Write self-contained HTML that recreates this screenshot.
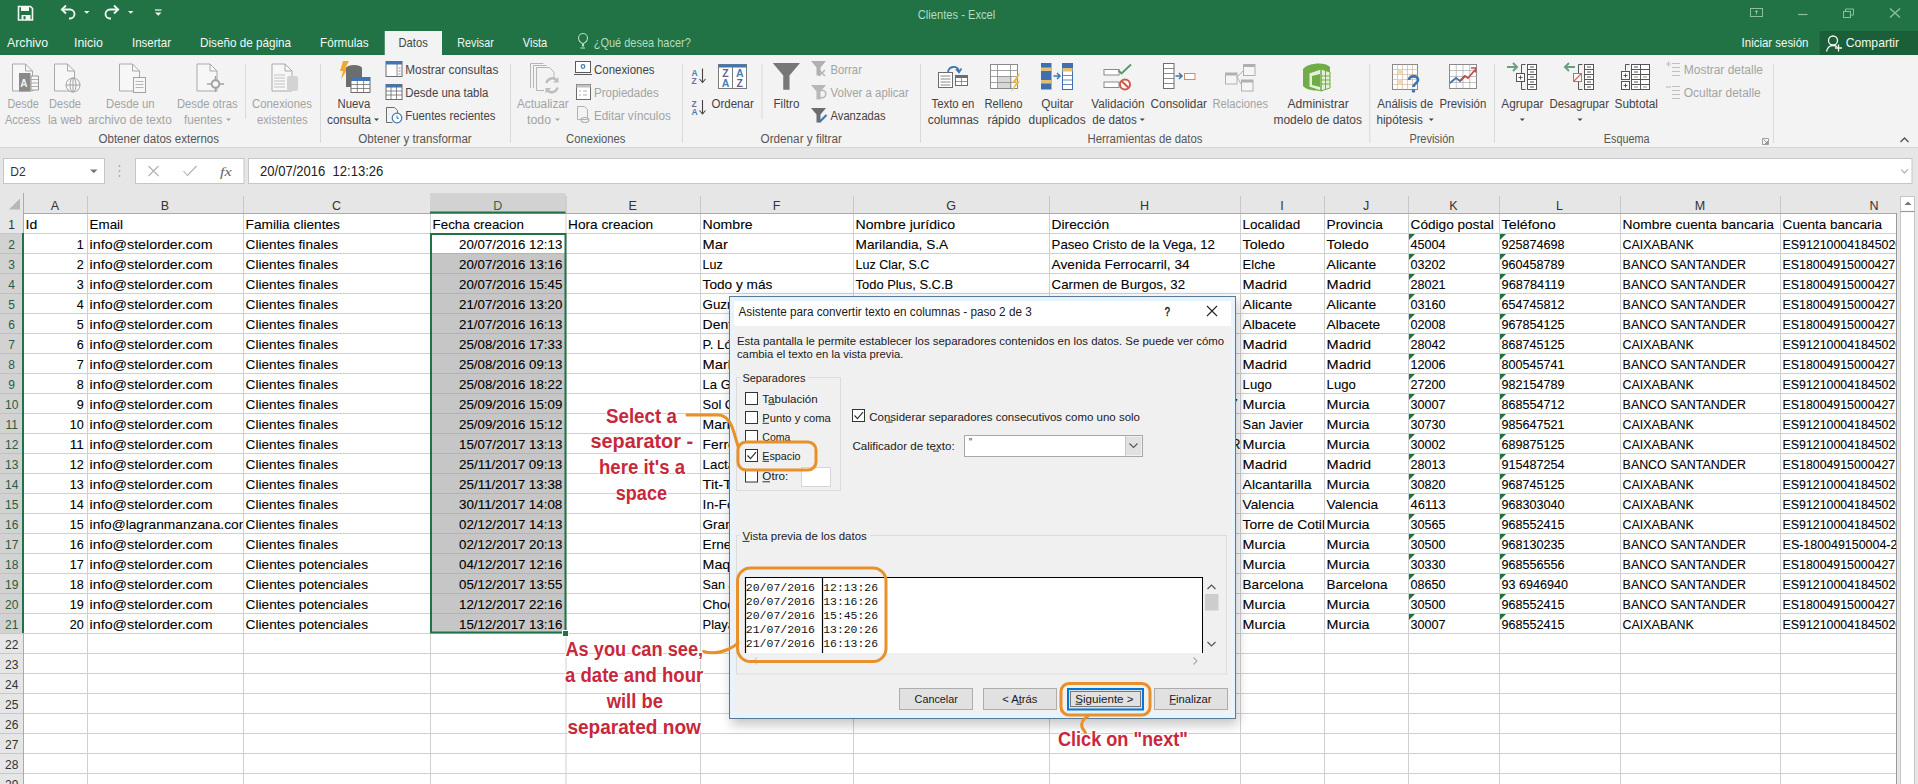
<!DOCTYPE html>
<html><head><meta charset="utf-8"><title>Clientes - Excel</title>
<style>
html,body{margin:0;padding:0;background:#fff;overflow:hidden;}
svg{display:block;font-family:"Liberation Sans", sans-serif;}
</style></head><body>
<svg width="1918" height="784" viewBox="0 0 1918 784">
<defs>
<filter id="shadow" x="-10%" y="-10%" width="125%" height="125%"><feGaussianBlur stdDeviation="6"/></filter>
</defs>
<rect x="0" y="0" width="1918" height="784" fill="#ffffff" />
<rect x="0" y="0" width="1918" height="55" fill="#217346" />
<path d="M18.5 6.5 h12 l2 2 v11.5 h-14 z" fill="none" stroke="#f2f8f4" stroke-width="1.6" />
<rect x="21" y="7" width="8" height="4" fill="#f2f8f4" />
<rect x="21.5" y="15" width="9" height="5" fill="#f2f8f4" />
<rect x="23.5" y="16.2" width="2" height="3" fill="#217346" />
<path d="M63 9.5 h7 a4.5 4.5 0 0 1 0 9 h-1" fill="none" stroke="#f2f8f4" stroke-width="1.8" />
<path d="M66 5.5 l-4.2 4 l4.2 4" fill="none" stroke="#f2f8f4" stroke-width="1.8" />
<path d="M84 11 h5.5 l-2.75 2.75 z" fill="#f2f8f4" />
<path d="M117 9.5 h-7 a4.5 4.5 0 0 0 0 9 h1" fill="none" stroke="#f2f8f4" stroke-width="1.8" />
<path d="M114 5.5 l4.2 4 l-4.2 4" fill="none" stroke="#f2f8f4" stroke-width="1.8" />
<path d="M128 11 h5.5 l-2.75 2.75 z" fill="#f2f8f4" />
<line x1="155" y1="10" x2="161.5" y2="10" stroke="#f2f8f4" stroke-width="1.2" />
<path d="M155 12.5 h6.5 l-3.25 3.25 z" fill="#f2f8f4" />
<text x="917.80" y="18.80" font-size="12.5" fill="#b4dcc0" textLength="77.40" lengthAdjust="spacingAndGlyphs"  >Clientes - Excel</text>
<rect x="1750.5" y="8.5" width="12" height="8" fill="none" stroke="#8cbf9e" stroke-width="1" />
<path d="M1756.5 10 l-2 2 h4 z" fill="#8cbf9e" />
<line x1="1756.5" y1="11" x2="1756.5" y2="14.5" stroke="#8cbf9e" stroke-width="1" />
<line x1="1798" y1="14.5" x2="1807.5" y2="14.5" stroke="#8cbf9e" stroke-width="1.2" />
<rect x="1843.5" y="11.5" width="7" height="6" fill="none" stroke="#8cbf9e" stroke-width="1" />
<path d="M1845.5 11.5 v-2.5 h8 v6 h-2.5" fill="none" stroke="#8cbf9e" stroke-width="1" />
<path d="M1890 8.5 l10 9 M1900 8.5 l-10 9" fill="none" stroke="#8cbf9e" stroke-width="1.4" />
<rect x="384.75" y="31" width="57.25" height="24" fill="#f3f3f3" />
<text x="7.00" y="47.10" font-size="13" fill="#f2f8f4" textLength="41.00" lengthAdjust="spacingAndGlyphs"  >Archivo</text>
<text x="74.00" y="47.10" font-size="13" fill="#f2f8f4" textLength="28.80" lengthAdjust="spacingAndGlyphs"  >Inicio</text>
<text x="132.00" y="47.10" font-size="13" fill="#f2f8f4" textLength="39.00" lengthAdjust="spacingAndGlyphs"  >Insertar</text>
<text x="200.00" y="47.10" font-size="13" fill="#f2f8f4" textLength="91.00" lengthAdjust="spacingAndGlyphs"  >Diseño de página</text>
<text x="320.00" y="47.10" font-size="13" fill="#f2f8f4" textLength="48.70" lengthAdjust="spacingAndGlyphs"  >Fórmulas</text>
<text x="457.25" y="47.10" font-size="13" fill="#f2f8f4" textLength="36.50" lengthAdjust="spacingAndGlyphs"  >Revisar</text>
<text x="522.75" y="47.10" font-size="13" fill="#f2f8f4" textLength="24.50" lengthAdjust="spacingAndGlyphs"  >Vista</text>
<text x="398.50" y="47.10" font-size="13" fill="#444444" textLength="29.25" lengthAdjust="spacingAndGlyphs"  >Datos</text>
<path d="M582.5 46 v-2.5 c-3 -1.5 -4 -3.5 -4 -5.5 a4.5 4.5 0 0 1 9 0 c0 2 -1 4 -4 5.5 v2.5 z" fill="none" stroke="#b4dcc0" stroke-width="1.1" />
<line x1="580.5" y1="48" x2="585" y2="48" stroke="#b4dcc0" stroke-width="1.1" />
<text x="593.75" y="47.10" font-size="13" fill="#b4dcc0" textLength="97.00" lengthAdjust="spacingAndGlyphs"  >¿Qué desea hacer?</text>
<text x="1741.60" y="47.00" font-size="13" fill="#f2f8f4" textLength="66.80" lengthAdjust="spacingAndGlyphs"  >Iniciar sesión</text>
<rect x="1819.7" y="31" width="98.3" height="24" fill="#1b5f38" />
<circle cx="1833" cy="40.5" r="4.5" fill="none" stroke="#f2f8f4" stroke-width="1.3"/>
<path d="M1826.5 51.5 c1 -4.5 4 -6 6.5 -6 c1.5 0 3 0.5 4 1.2" fill="none" stroke="#f2f8f4" stroke-width="1.3" />
<path d="M1838.5 44.5 v7 M1835 48 h7" fill="none" stroke="#f2f8f4" stroke-width="1.3" />
<text x="1845.70" y="47.00" font-size="13" fill="#f2f8f4" textLength="53.40" lengthAdjust="spacingAndGlyphs"  >Compartir</text>
<rect x="0" y="55" width="1918" height="92" fill="#f3f3f3" />
<line x1="0" y1="147.5" x2="1918" y2="147.5" stroke="#d5d5d5" stroke-width="1" />
<path d="M12.5 64.0 h13 l7 7 v20 h-20 z" fill="#f7f7f7" stroke="#a9a9a9" stroke-width="1" />
<path d="M25.5 64.0 v7 h7" fill="none" stroke="#a9a9a9" stroke-width="1" />
<rect x="19" y="73" width="11.5" height="18.5" fill="#8a8a8a" />
<text x="20.20" y="86.50" font-size="10" fill="#f3f3f3" font-weight="700"  >A</text>
<path d="M31 76 h7.5 v14 h-7.5 z" fill="#f7f7f7" stroke="#9a9a9a" stroke-width="1" />
<line x1="31" y1="79.5" x2="38.5" y2="79.5" stroke="#9a9a9a" stroke-width="0.8" />
<line x1="31" y1="83" x2="38.5" y2="83" stroke="#9a9a9a" stroke-width="0.8" />
<line x1="31" y1="86.5" x2="38.5" y2="86.5" stroke="#9a9a9a" stroke-width="0.8" />
<path d="M54.5 64.0 h13 l7 7 v20 h-20 z" fill="#f7f7f7" stroke="#a9a9a9" stroke-width="1" />
<path d="M67.5 64.0 v7 h7" fill="none" stroke="#a9a9a9" stroke-width="1" />
<circle cx="73" cy="85" r="7" fill="#f7f7f7" stroke="#a3a3a3" stroke-width="1"/>
<ellipse cx="73" cy="85" rx="3" ry="7" fill="none" stroke="#a3a3a3" stroke-width="1"/>
<line x1="66" y1="85" x2="80" y2="85" stroke="#a3a3a3" stroke-width="1" />
<line x1="73" y1="78" x2="73" y2="92" stroke="#a3a3a3" stroke-width="1" />
<path d="M119.5 64.0 h13 l7 7 v20 h-20 z" fill="#f7f7f7" stroke="#a9a9a9" stroke-width="1" />
<path d="M132.5 64.0 v7 h7" fill="none" stroke="#a9a9a9" stroke-width="1" />
<rect x="133.5" y="77.5" width="12" height="15" fill="#f7f7f7" stroke="#a3a3a3" stroke-width="1" />
<line x1="135.5" y1="81.5" x2="143.5" y2="81.5" stroke="#a3a3a3" stroke-width="0.8" />
<line x1="135.5" y1="84.5" x2="143.5" y2="84.5" stroke="#a3a3a3" stroke-width="0.8" />
<line x1="135.5" y1="87.5" x2="143.5" y2="87.5" stroke="#a3a3a3" stroke-width="0.8" />
<path d="M197.0 64.0 h13 l7 7 v20 h-20 z" fill="#f7f7f7" stroke="#a9a9a9" stroke-width="1" />
<path d="M210.0 64.0 v7 h7" fill="none" stroke="#a9a9a9" stroke-width="1" />
<circle cx="215.5" cy="84" r="3.8" fill="#f7f7f7" stroke="#a3a3a3" stroke-width="2"/>
<line x1="207" y1="84" x2="211" y2="84" stroke="#a3a3a3" stroke-width="1.5" />
<line x1="220" y1="84" x2="224" y2="84" stroke="#a3a3a3" stroke-width="1.5" />
<line x1="215.5" y1="76" x2="215.5" y2="80" stroke="#a3a3a3" stroke-width="1.5" />
<line x1="215.5" y1="88" x2="215.5" y2="92" stroke="#a3a3a3" stroke-width="1.5" />
<path d="M272.0 64.0 h13 l7 7 v20 h-20 z" fill="#f7f7f7" stroke="#a9a9a9" stroke-width="1" />
<path d="M285.0 64.0 v7 h7" fill="none" stroke="#a9a9a9" stroke-width="1" />
<line x1="274" y1="75" x2="285" y2="75" stroke="#b5b5b5" stroke-width="0.8" />
<line x1="274" y1="78" x2="285" y2="78" stroke="#b5b5b5" stroke-width="0.8" />
<line x1="274" y1="81" x2="285" y2="81" stroke="#b5b5b5" stroke-width="0.8" />
<line x1="274" y1="84" x2="285" y2="84" stroke="#b5b5b5" stroke-width="0.8" />
<line x1="274" y1="87" x2="285" y2="87" stroke="#b5b5b5" stroke-width="0.8" />
<rect x="287" y="76" width="11" height="15" fill="#d3d3d3" rx="2" />
<text x="7.50" y="108.20" font-size="12" fill="#a3a3a3" textLength="31.25" lengthAdjust="spacingAndGlyphs"  >Desde</text>
<text x="5.00" y="124.00" font-size="12" fill="#a3a3a3" textLength="35.50" lengthAdjust="spacingAndGlyphs"  >Access</text>
<text x="49.00" y="108.20" font-size="12" fill="#a3a3a3" textLength="32.00" lengthAdjust="spacingAndGlyphs"  >Desde</text>
<text x="48.00" y="124.00" font-size="12" fill="#a3a3a3" textLength="34.00" lengthAdjust="spacingAndGlyphs"  >la web</text>
<text x="106.00" y="108.20" font-size="12" fill="#a3a3a3" textLength="48.50" lengthAdjust="spacingAndGlyphs"  >Desde un</text>
<text x="88.00" y="124.00" font-size="12" fill="#a3a3a3" textLength="83.75" lengthAdjust="spacingAndGlyphs"  >archivo de texto</text>
<text x="177.00" y="108.20" font-size="12" fill="#a3a3a3" textLength="60.50" lengthAdjust="spacingAndGlyphs"  >Desde otras</text>
<text x="184.00" y="124.00" font-size="12" fill="#a3a3a3" textLength="38.50" lengthAdjust="spacingAndGlyphs"  >fuentes</text>
<path d="M226.0 118.5 h5 l-2.5 2.5 z" fill="#a3a3a3" />
<line x1="245.5" y1="64" x2="245.5" y2="119" stroke="#dadada" stroke-width="1" />
<text x="252.00" y="108.20" font-size="12" fill="#a3a3a3" textLength="60.00" lengthAdjust="spacingAndGlyphs"  >Conexiones</text>
<text x="257.00" y="124.00" font-size="12" fill="#a3a3a3" textLength="50.50" lengthAdjust="spacingAndGlyphs"  >existentes</text>
<text x="98.50" y="143.30" font-size="12" fill="#555555" textLength="120.50" lengthAdjust="spacingAndGlyphs"  >Obtener datos externos</text>
<line x1="320.5" y1="64" x2="320.5" y2="143" stroke="#dadada" stroke-width="1" />
<path d="M343 61 l6 0 l-3.5 6.5 l3 0 l-7.5 12 l2 -8.5 l-3 0 z" fill="#f0a830" />
<ellipse cx="354" cy="68" rx="8" ry="3" fill="#6d6d6d"/>
<rect x="346" y="68" width="16" height="19" fill="#6d6d6d" />
<rect x="351" y="77.5" width="19" height="15" fill="#ffffff" stroke="#6d6d6d" stroke-width="1" />
<rect x="351" y="77.5" width="19" height="3.5" fill="#3f77b5" />
<line x1="357.3" y1="80" x2="357.3" y2="92.5" stroke="#6d6d6d" stroke-width="0.8" />
<line x1="363.6" y1="80" x2="363.6" y2="92.5" stroke="#6d6d6d" stroke-width="0.8" />
<line x1="351" y1="84.5" x2="370" y2="84.5" stroke="#6d6d6d" stroke-width="0.8" />
<line x1="351" y1="88.5" x2="370" y2="88.5" stroke="#6d6d6d" stroke-width="0.8" />
<text x="337.50" y="108.20" font-size="12" fill="#444444" textLength="32.80" lengthAdjust="spacingAndGlyphs"  >Nueva</text>
<text x="327.00" y="124.00" font-size="12" fill="#444444" textLength="44.00" lengthAdjust="spacingAndGlyphs"  >consulta</text>
<path d="M374.0 118.5 h5 l-2.5 2.5 z" fill="#444444" />
<rect x="386.0" y="61.5" width="16" height="15" fill="#ffffff" stroke="#6d6d6d" stroke-width="1" />
<rect x="386.0" y="61.5" width="16" height="3" fill="#3f77b5" />
<line x1="397" y1="64" x2="397" y2="76" stroke="#6d6d6d" stroke-width="0.8" />
<line x1="398.5" y1="68" x2="400.5" y2="68" stroke="#6d6d6d" stroke-width="0.8" />
<line x1="398.5" y1="71" x2="400.5" y2="71" stroke="#6d6d6d" stroke-width="0.8" />
<line x1="398.5" y1="74" x2="400.5" y2="74" stroke="#6d6d6d" stroke-width="0.8" />
<rect x="386.0" y="84.5" width="16" height="15" fill="#ffffff" stroke="#6d6d6d" stroke-width="1" />
<rect x="386.0" y="84.5" width="16" height="3" fill="#3f77b5" />
<line x1="391" y1="87" x2="391" y2="100" stroke="#6d6d6d" stroke-width="0.8" />
<line x1="396.5" y1="87" x2="396.5" y2="100" stroke="#6d6d6d" stroke-width="0.8" />
<line x1="386" y1="91" x2="402" y2="91" stroke="#6d6d6d" stroke-width="0.8" />
<line x1="386" y1="95" x2="402" y2="95" stroke="#6d6d6d" stroke-width="0.8" />
<path d="M386.5 107.5 h8 l3 3 v6 M386.5 107.5 v15 h6" fill="none" stroke="#6d6d6d" stroke-width="1" />
<circle cx="397" cy="118" r="4.8" fill="#ffffff" stroke="#3f77b5" stroke-width="1.2"/>
<path d="M397 115.5 v2.8 h2" fill="none" stroke="#3f77b5" stroke-width="1" />
<text x="405.30" y="73.70" font-size="12" fill="#444444" textLength="93.00" lengthAdjust="spacingAndGlyphs"  >Mostrar consultas</text>
<text x="405.30" y="96.50" font-size="12" fill="#444444" textLength="83.00" lengthAdjust="spacingAndGlyphs"  >Desde una tabla</text>
<text x="405.30" y="119.50" font-size="12" fill="#444444" textLength="90.20" lengthAdjust="spacingAndGlyphs"  >Fuentes recientes</text>
<text x="358.30" y="143.30" font-size="12" fill="#555555" textLength="113.40" lengthAdjust="spacingAndGlyphs"  >Obtener y transformar</text>
<line x1="510.5" y1="64" x2="510.5" y2="143" stroke="#dadada" stroke-width="1" />
<path d="M530.5 88 v-24.5 h13" fill="none" stroke="#b5b5b5" stroke-width="1" />
<path d="M533.5 88 v-22.5 h13" fill="none" stroke="#b5b5b5" stroke-width="1" />
<path d="M536.5 90.5 v-23 h13 l4.5 4.5 v7" fill="none" stroke="#b5b5b5" stroke-width="1" />
<line x1="536.5" y1="90.5" x2="544" y2="90.5" stroke="#b5b5b5" stroke-width="1" />
<path d="M546.5 83 a6 6 0 0 1 10.5 -2.5" fill="none" stroke="#bdbdbd" stroke-width="2.4" />
<path d="M557.5 87.5 a6 6 0 0 1 -10.5 2.5" fill="none" stroke="#bdbdbd" stroke-width="2.4" />
<path d="M558.5 77 v5.5 h-5.5 z" fill="#bdbdbd" />
<path d="M545.5 93.5 v-5.5 h5.5 z" fill="#bdbdbd" />
<text x="517.00" y="108.20" font-size="12" fill="#a3a3a3" textLength="51.75" lengthAdjust="spacingAndGlyphs"  >Actualizar</text>
<text x="527.00" y="124.00" font-size="12" fill="#a3a3a3" textLength="24.00" lengthAdjust="spacingAndGlyphs"  >todo</text>
<path d="M555.0 118.5 h5 l-2.5 2.5 z" fill="#a3a3a3" />
<rect x="575.5" y="61.5" width="15" height="11" fill="#ffffff" stroke="#5a5a5a" stroke-width="1" />
<line x1="574" y1="74.5" x2="592" y2="74.5" stroke="#5a5a5a" stroke-width="1" />
<circle cx="583" cy="66.5" r="1.8" fill="none" stroke="#3f77b5" stroke-width="1.2"/>
<rect x="576.5" y="84.5" width="14" height="15" fill="#ffffff" stroke="#6d6d6d" stroke-width="1" />
<rect x="576.5" y="84.5" width="14" height="3" fill="#c0c0c0" />
<line x1="579" y1="91" x2="581" y2="91" stroke="#b0b0b0" stroke-width="1" />
<line x1="583" y1="91" x2="587" y2="91" stroke="#b0b0b0" stroke-width="1" />
<line x1="579" y1="95" x2="581" y2="95" stroke="#b0b0b0" stroke-width="1" />
<line x1="583" y1="95" x2="587" y2="95" stroke="#b0b0b0" stroke-width="1" />
<path d="M577.5 106.5 h7 l3 3 v10 h-10 z" fill="none" stroke="#b0b0b0" stroke-width="1" />
<ellipse cx="585" cy="120" rx="4" ry="2.5" fill="none" stroke="#b0b0b0" stroke-width="1.2"/>
<text x="594.00" y="73.70" font-size="12" fill="#444444" textLength="60.50" lengthAdjust="spacingAndGlyphs"  >Conexiones</text>
<text x="594.00" y="96.50" font-size="12" fill="#a3a3a3" textLength="64.75" lengthAdjust="spacingAndGlyphs"  >Propiedades</text>
<text x="594.00" y="119.50" font-size="12" fill="#a3a3a3" textLength="76.75" lengthAdjust="spacingAndGlyphs"  >Editar vínculos</text>
<text x="566.00" y="143.30" font-size="12" fill="#555555" textLength="59.50" lengthAdjust="spacingAndGlyphs"  >Conexiones</text>
<line x1="682.5" y1="64" x2="682.5" y2="143" stroke="#dadada" stroke-width="1" />
<text x="691.50" y="75.50" font-size="8.5" fill="#4a7fb5" font-weight="700"  >A</text>
<text x="691.50" y="83.50" font-size="8.5" fill="#7a6aa0" font-weight="700"  >Z</text>
<line x1="702.5" y1="68.5" x2="702.5" y2="82.5" stroke="#444" stroke-width="1.1" />
<path d="M699.5 79.0 l3 3.5 l3 -3.5" fill="none" stroke="#444" stroke-width="1.1" />
<text x="691.50" y="107.00" font-size="8.5" fill="#7a6aa0" font-weight="700"  >Z</text>
<text x="691.50" y="115.00" font-size="8.5" fill="#4a7fb5" font-weight="700"  >A</text>
<line x1="702.5" y1="100" x2="702.5" y2="114" stroke="#444" stroke-width="1.1" />
<path d="M699.5 110.5 l3 3.5 l3 -3.5" fill="none" stroke="#444" stroke-width="1.1" />
<rect x="718.5" y="64.5" width="28" height="24" fill="#ffffff" stroke="#7a7a7a" stroke-width="1" />
<rect x="718.5" y="64.5" width="28" height="3" fill="#3f77b5" />
<line x1="732.5" y1="67" x2="732.5" y2="88.5" stroke="#7a7a7a" stroke-width="1" />
<text x="725.50" y="77.30" font-size="10.5" fill="#6b5b95" font-weight="700" text-anchor="middle"  >Z</text>
<text x="725.50" y="87.30" font-size="10.5" fill="#4a7fb5" font-weight="700" text-anchor="middle"  >A</text>
<text x="739.75" y="77.30" font-size="10.5" fill="#4a7fb5" font-weight="700" text-anchor="middle"  >A</text>
<text x="739.75" y="87.30" font-size="10.5" fill="#6b5b95" font-weight="700" text-anchor="middle"  >Z</text>
<text x="711.50" y="108.20" font-size="12" fill="#444444" textLength="42.25" lengthAdjust="spacingAndGlyphs"  >Ordenar</text>
<line x1="762.0" y1="64" x2="762.0" y2="119" stroke="#dadada" stroke-width="1" />
<path d="M772.75 63 h27.25 l-10.5 12.5 v14.25 h-6.25 v-14.25 z" fill="#777777" />
<text x="773.50" y="108.20" font-size="12" fill="#444444" textLength="25.90" lengthAdjust="spacingAndGlyphs"  >Filtro</text>
<path d="M811 61 h15 l-5.5 6.5 v8 h-4 v-8 z" fill="#b0b0b0" />
<path d="M819 70 l6 6 M825 70 l-6 6" fill="none" stroke="#b0b0b0" stroke-width="1.3" />
<path d="M811 85 h15 l-5.5 6.5 v8 h-4 v-8 z" fill="#b8b8b8" />
<circle cx="822" cy="94" r="3.8" fill="none" stroke="#b8b8b8" stroke-width="1.6"/>
<path d="M811 108 h15 l-5.5 6.5 v8 h-4 v-8 z" fill="#6d6d6d" />
<path d="M819.5 122 l7 -7" fill="none" stroke="#3f77b5" stroke-width="2.2" />
<text x="830.60" y="73.70" font-size="12" fill="#a3a3a3" textLength="31.30" lengthAdjust="spacingAndGlyphs"  >Borrar</text>
<text x="830.60" y="96.50" font-size="12" fill="#a3a3a3" textLength="78.15" lengthAdjust="spacingAndGlyphs"  >Volver a aplicar</text>
<text x="830.60" y="119.50" font-size="12" fill="#444444" textLength="55.00" lengthAdjust="spacingAndGlyphs"  >Avanzadas</text>
<text x="760.60" y="143.30" font-size="12" fill="#555555" textLength="81.30" lengthAdjust="spacingAndGlyphs"  >Ordenar y filtrar</text>
<line x1="920.5" y1="64" x2="920.5" y2="143" stroke="#dadada" stroke-width="1" />
<path d="M948 72 c1 -6 9 -7 11 -1" fill="none" stroke="#3f77b5" stroke-width="1.8" />
<path d="M956 69 l3 3.5 l2.5 -4" fill="none" stroke="#3f77b5" stroke-width="1.6" />
<rect x="938.5" y="72.5" width="14" height="15" fill="#ffffff" stroke="#6d6d6d" stroke-width="1" />
<line x1="940.5" y1="76" x2="950.5" y2="76" stroke="#6d6d6d" stroke-width="0.8" />
<line x1="940.5" y1="79" x2="950.5" y2="79" stroke="#6d6d6d" stroke-width="0.8" />
<line x1="940.5" y1="82" x2="950.5" y2="82" stroke="#6d6d6d" stroke-width="0.8" />
<line x1="940.5" y1="85" x2="950.5" y2="85" stroke="#6d6d6d" stroke-width="0.8" />
<rect x="955.5" y="75.5" width="12" height="10" fill="#ffffff" stroke="#6d6d6d" stroke-width="1" />
<rect x="955.5" y="75.5" width="12" height="2.5" fill="#6d6d6d" />
<line x1="961.5" y1="78" x2="961.5" y2="85.5" stroke="#6d6d6d" stroke-width="0.7" />
<line x1="955.5" y1="81.5" x2="967.5" y2="81.5" stroke="#6d6d6d" stroke-width="0.7" />
<text x="931.50" y="108.20" font-size="12" fill="#444444" textLength="42.90" lengthAdjust="spacingAndGlyphs"  >Texto en</text>
<text x="927.75" y="124.00" font-size="12" fill="#444444" textLength="51.00" lengthAdjust="spacingAndGlyphs"  >columnas</text>
<rect x="990.5" y="64.5" width="27" height="24" fill="#ffffff" stroke="#8a8a8a" stroke-width="1" />
<rect x="998" y="76" width="14" height="12" fill="#d8d8d8" />
<line x1="997.5" y1="64.5" x2="997.5" y2="88.5" stroke="#8a8a8a" stroke-width="0.8" />
<line x1="1010.5" y1="64.5" x2="1010.5" y2="88.5" stroke="#8a8a8a" stroke-width="0.8" />
<line x1="990.5" y1="70.5" x2="1017.5" y2="70.5" stroke="#8a8a8a" stroke-width="0.8" />
<line x1="990.5" y1="76.5" x2="1017.5" y2="76.5" stroke="#8a8a8a" stroke-width="0.8" />
<line x1="990.5" y1="82.5" x2="1017.5" y2="82.5" stroke="#8a8a8a" stroke-width="0.8" />
<path d="M1019 73.5 l-7 9 h4 l-5.5 10 l9.5 -11 h-4 l4 -8 z" fill="#f0b840" />
<text x="984.40" y="108.20" font-size="12" fill="#444444" textLength="38.10" lengthAdjust="spacingAndGlyphs"  >Relleno</text>
<text x="987.50" y="124.00" font-size="12" fill="#444444" textLength="33.10" lengthAdjust="spacingAndGlyphs"  >rápido</text>
<rect x="1041" y="63" width="10.5" height="26.5" fill="#3f6fb0" />
<rect x="1041" y="67.5" width="10.5" height="3.5" fill="#e5c070" />
<rect x="1041" y="80" width="10.5" height="3.5" fill="#e5c070" />
<path d="M1053.5 76 h6 M1057 73 l3 3 l-3 3" fill="none" stroke="#3f77b5" stroke-width="1.5" />
<rect x="1062.5" y="63.5" width="10" height="26" fill="#ffffff" stroke="#3f6fb0" stroke-width="1" />
<rect x="1062.5" y="63.5" width="10" height="4.5" fill="#3f6fb0" />
<rect x="1062.5" y="68" width="10" height="3.5" fill="#e5c070" />
<line x1="1062.5" y1="75.5" x2="1072.5" y2="75.5" stroke="#3f6fb0" stroke-width="0.8" />
<line x1="1062.5" y1="80" x2="1072.5" y2="80" stroke="#3f6fb0" stroke-width="0.8" />
<line x1="1062.5" y1="84.5" x2="1072.5" y2="84.5" stroke="#3f6fb0" stroke-width="0.8" />
<text x="1041.25" y="108.20" font-size="12" fill="#444444" textLength="32.25" lengthAdjust="spacingAndGlyphs"  >Quitar</text>
<text x="1028.50" y="124.00" font-size="12" fill="#444444" textLength="57.10" lengthAdjust="spacingAndGlyphs"  >duplicados</text>
<rect x="1104" y="69.5" width="15" height="5.5" fill="#ffffff" stroke="#8a8a8a" stroke-width="1" />
<rect x="1104" y="82" width="15" height="5.5" fill="#ffffff" stroke="#8a8a8a" stroke-width="1" />
<path d="M1118.5 70.5 l3 3 l9.5 -9" fill="none" stroke="#4f9a6a" stroke-width="1.8" />
<circle cx="1125" cy="84.4" r="5" fill="#ffffff" stroke="#d05a4a" stroke-width="2"/>
<line x1="1121.5" y1="81" x2="1128.5" y2="87.8" stroke="#d05a4a" stroke-width="2" />
<text x="1091.25" y="108.20" font-size="12" fill="#444444" textLength="53.15" lengthAdjust="spacingAndGlyphs"  >Validación</text>
<text x="1092.25" y="124.00" font-size="12" fill="#444444" textLength="44.65" lengthAdjust="spacingAndGlyphs"  >de datos</text>
<path d="M1139.75 118.5 h5 l-2.5 2.5 z" fill="#444444" />
<rect x="1163.5" y="63.5" width="10.5" height="25" fill="#ffffff" stroke="#6d6d6d" stroke-width="1" />
<line x1="1163.5" y1="68.5" x2="1174" y2="68.5" stroke="#6d6d6d" stroke-width="0.8" />
<line x1="1163.5" y1="73.5" x2="1174" y2="73.5" stroke="#6d6d6d" stroke-width="0.8" />
<line x1="1163.5" y1="78.5" x2="1174" y2="78.5" stroke="#6d6d6d" stroke-width="0.8" />
<line x1="1163.5" y1="83.5" x2="1174" y2="83.5" stroke="#6d6d6d" stroke-width="0.8" />
<path d="M1175.5 76 h6 M1179 73 l3 3 l-3 3" fill="none" stroke="#3f77b5" stroke-width="1.5" />
<rect x="1184.5" y="73.5" width="10.5" height="6" fill="#ffffff" stroke="#d08a6a" stroke-width="1" />
<text x="1150.60" y="108.20" font-size="12" fill="#444444" textLength="56.30" lengthAdjust="spacingAndGlyphs"  >Consolidar</text>
<rect x="1225.5" y="73.0" width="11.5" height="11" fill="#f5f5f5" stroke="#b0b0b0" stroke-width="1" />
<rect x="1225.5" y="73.0" width="11.5" height="2.5" fill="#b0b0b0" />
<rect x="1243.5" y="64.5" width="11.5" height="11" fill="#f5f5f5" stroke="#b0b0b0" stroke-width="1" />
<rect x="1243.5" y="64.5" width="11.5" height="2.5" fill="#b0b0b0" />
<rect x="1241.5" y="80.0" width="11.5" height="11" fill="#f5f5f5" stroke="#b0b0b0" stroke-width="1" />
<rect x="1241.5" y="80.0" width="11.5" height="2.5" fill="#b0b0b0" />
<path d="M1237 77 l6 -6 M1237 77 l4 7" fill="none" stroke="#b0b0b0" stroke-width="1" />
<text x="1212.50" y="108.20" font-size="12" fill="#a3a3a3" textLength="55.50" lengthAdjust="spacingAndGlyphs"  >Relaciones</text>
<path d="M1303 69 c4 -6 22 -8 27 -2 v19 c-5 6 -22 6 -27 0 z" fill="#70ad47" />
<path d="M1309 73 l12 -4 l9 3 v16 l-9 3 l-12 -4 z" fill="#e4f0d8" stroke="#70ad47" stroke-width="1" />
<line x1="1321" y1="69" x2="1321" y2="91" stroke="#70ad47" stroke-width="1.5" />
<line x1="1325.5" y1="71" x2="1325.5" y2="89" stroke="#70ad47" stroke-width="1" />
<line x1="1321" y1="76" x2="1330" y2="76" stroke="#70ad47" stroke-width="1" />
<line x1="1321" y1="80" x2="1330" y2="80" stroke="#70ad47" stroke-width="1" />
<line x1="1321" y1="84" x2="1330" y2="84" stroke="#70ad47" stroke-width="1" />
<path d="M1312 76 l8 -2 v13 l-8 -2 z" fill="#70ad47" />
<text x="1287.50" y="108.20" font-size="12" fill="#444444" textLength="61.25" lengthAdjust="spacingAndGlyphs"  >Administrar</text>
<text x="1273.50" y="124.00" font-size="12" fill="#444444" textLength="88.40" lengthAdjust="spacingAndGlyphs"  >modelo de datos</text>
<text x="1087.50" y="143.30" font-size="12" fill="#555555" textLength="115.00" lengthAdjust="spacingAndGlyphs"  >Herramientas de datos</text>
<line x1="1369.75" y1="64" x2="1369.75" y2="143" stroke="#dadada" stroke-width="1" />
<rect x="1392.5" y="64.5" width="25" height="25" fill="#ffffff" stroke="#8a8a8a" stroke-width="1" />
<line x1="1397.5" y1="64.5" x2="1397.5" y2="89.5" stroke="#c9a98a" stroke-width="0.6" />
<line x1="1392.5" y1="69.5" x2="1417.5" y2="69.5" stroke="#c9a98a" stroke-width="0.6" />
<line x1="1402.5" y1="64.5" x2="1402.5" y2="89.5" stroke="#c9a98a" stroke-width="0.6" />
<line x1="1392.5" y1="74.5" x2="1417.5" y2="74.5" stroke="#c9a98a" stroke-width="0.6" />
<line x1="1407.5" y1="64.5" x2="1407.5" y2="89.5" stroke="#c9a98a" stroke-width="0.6" />
<line x1="1392.5" y1="79.5" x2="1417.5" y2="79.5" stroke="#c9a98a" stroke-width="0.6" />
<line x1="1412.5" y1="64.5" x2="1412.5" y2="89.5" stroke="#c9a98a" stroke-width="0.6" />
<line x1="1392.5" y1="84.5" x2="1417.5" y2="84.5" stroke="#c9a98a" stroke-width="0.6" />
<rect x="1397.5" y="69.5" width="5" height="5" fill="#f3d9b8" />
<rect x="1397.5" y="79.5" width="5" height="5" fill="#f3d9b8" />
<path d="M1409 80 c0 -5 9 -5 9 0 c0 3 -4.5 3.5 -4.5 7" fill="none" stroke="#3f77b5" stroke-width="2.8" fill="#ffffff"/>
<circle cx="1413.5" cy="91" r="1.8" fill="#3f77b5"/>
<text x="1377.25" y="108.20" font-size="12" fill="#444444" textLength="55.85" lengthAdjust="spacingAndGlyphs"  >Análisis de</text>
<text x="1376.50" y="124.00" font-size="12" fill="#444444" textLength="46.25" lengthAdjust="spacingAndGlyphs"  >hipótesis</text>
<path d="M1428.75 118.5 h5 l-2.5 2.5 z" fill="#444444" />
<rect x="1449.5" y="64.5" width="27" height="24" fill="#ffffff" stroke="#8a8a8a" stroke-width="1" />
<line x1="1456.25" y1="64.5" x2="1456.25" y2="88.5" stroke="#9a9a9a" stroke-width="0.6" />
<line x1="1463.0" y1="64.5" x2="1463.0" y2="88.5" stroke="#9a9a9a" stroke-width="0.6" />
<line x1="1469.75" y1="64.5" x2="1469.75" y2="88.5" stroke="#9a9a9a" stroke-width="0.6" />
<line x1="1449.5" y1="70.5" x2="1476.5" y2="70.5" stroke="#9a9a9a" stroke-width="0.6" />
<line x1="1449.5" y1="76.5" x2="1476.5" y2="76.5" stroke="#9a9a9a" stroke-width="0.6" />
<line x1="1449.5" y1="82.5" x2="1476.5" y2="82.5" stroke="#9a9a9a" stroke-width="0.6" />
<path d="M1450 83 l6 -5 l4 3 l5 -5" fill="none" stroke="#3f77b5" stroke-width="1.8" />
<path d="M1460 81 l5 -5 l3 2 l7 -8" fill="none" stroke="#c0504d" stroke-width="1.8" />
<path d="M1471 68 h4.5 v4.5" fill="none" stroke="#c0504d" stroke-width="1.6" />
<text x="1439.40" y="108.20" font-size="12" fill="#444444" textLength="46.85" lengthAdjust="spacingAndGlyphs"  >Previsión</text>
<text x="1409.40" y="143.30" font-size="12" fill="#555555" textLength="45.00" lengthAdjust="spacingAndGlyphs"  >Previsión</text>
<line x1="1494.5" y1="64" x2="1494.5" y2="143" stroke="#dadada" stroke-width="1" />
<path d="M1507 67 h10 M1513 63 l4 4 l-4 4" fill="none" stroke="#68a080" stroke-width="2" />
<path d="M1525.5 64.5 h-4 v25 h4" fill="none" stroke="#555" stroke-width="1" />
<rect x="1516.5" y="73.5" width="8" height="8" fill="#ffffff" stroke="#555" stroke-width="1" />
<path d="M1518.5 77.5 h4 M1520.5 75.5 v4" fill="none" stroke="#555" stroke-width="1" />
<rect x="1527.5" y="64.5" width="9" height="25" fill="#ffffff" stroke="#555" stroke-width="1" />
<line x1="1527.5" y1="69.5" x2="1536.5" y2="69.5" stroke="#555" stroke-width="1" />
<line x1="1527.5" y1="74.5" x2="1536.5" y2="74.5" stroke="#555" stroke-width="1" />
<line x1="1527.5" y1="79.5" x2="1536.5" y2="79.5" stroke="#555" stroke-width="1" />
<line x1="1527.5" y1="84.5" x2="1536.5" y2="84.5" stroke="#555" stroke-width="1" />
<line x1="1530" y1="67" x2="1534" y2="67" stroke="#555" stroke-width="1" />
<line x1="1530" y1="72" x2="1534" y2="72" stroke="#555" stroke-width="1" />
<line x1="1530" y1="77" x2="1534" y2="77" stroke="#555" stroke-width="1" />
<line x1="1530" y1="82" x2="1534" y2="82" stroke="#555" stroke-width="1" />
<line x1="1530" y1="87" x2="1534" y2="87" stroke="#555" stroke-width="1" />
<path d="M1575 67 h-10 M1569 63 l-4 4 l4 4" fill="none" stroke="#68a080" stroke-width="2" />
<path d="M1582.5 64.5 h-4 v25 h4" fill="none" stroke="#555" stroke-width="1" />
<rect x="1573.5" y="73.5" width="8" height="8" fill="#ffffff" stroke="#d06a5a" stroke-width="1" />
<line x1="1574" y1="81" x2="1581" y2="74" stroke="#d06a5a" stroke-width="1.2" />
<rect x="1584.5" y="64.5" width="9" height="25" fill="#ffffff" stroke="#555" stroke-width="1" />
<line x1="1584.5" y1="69.5" x2="1593.5" y2="69.5" stroke="#555" stroke-width="1" />
<line x1="1584.5" y1="74.5" x2="1593.5" y2="74.5" stroke="#555" stroke-width="1" />
<line x1="1584.5" y1="79.5" x2="1593.5" y2="79.5" stroke="#555" stroke-width="1" />
<line x1="1584.5" y1="84.5" x2="1593.5" y2="84.5" stroke="#555" stroke-width="1" />
<line x1="1587" y1="67" x2="1591" y2="67" stroke="#555" stroke-width="1" />
<line x1="1587" y1="72" x2="1591" y2="72" stroke="#555" stroke-width="1" />
<line x1="1587" y1="77" x2="1591" y2="77" stroke="#555" stroke-width="1" />
<line x1="1587" y1="82" x2="1591" y2="82" stroke="#555" stroke-width="1" />
<line x1="1587" y1="87" x2="1591" y2="87" stroke="#555" stroke-width="1" />
<text x="1501.25" y="108.20" font-size="12" fill="#444444" textLength="42.25" lengthAdjust="spacingAndGlyphs"  >Agrupar</text>
<path d="M1519.75 118.5 h5 l-2.5 2.5 z" fill="#444444" />
<text x="1549.40" y="108.20" font-size="12" fill="#444444" textLength="59.60" lengthAdjust="spacingAndGlyphs"  >Desagrupar</text>
<path d="M1577.5 118.5 h5 l-2.5 2.5 z" fill="#444444" />
<path d="M1629.5 64.5 h-4 v6" fill="none" stroke="#555" stroke-width="1" />
<rect x="1621.5" y="71.5" width="8" height="8" fill="#ffffff" stroke="#555" stroke-width="1" />
<rect x="1621.5" y="81.5" width="8" height="8" fill="#ffffff" stroke="#555" stroke-width="1" />
<path d="M1623.5 75.5 h4 M1625.5 73.5 v4 M1623.5 85.5 h4 M1625.5 83.5 v4" fill="none" stroke="#555" stroke-width="1" />
<rect x="1631.5" y="64.5" width="18" height="25" fill="#ffffff" stroke="#555" stroke-width="1" />
<line x1="1640.5" y1="64.5" x2="1640.5" y2="89.5" stroke="#555" stroke-width="1" />
<line x1="1631.5" y1="69.5" x2="1649.5" y2="69.5" stroke="#555" stroke-width="1" />
<line x1="1631.5" y1="74.5" x2="1649.5" y2="74.5" stroke="#555" stroke-width="1" />
<line x1="1631.5" y1="79.5" x2="1649.5" y2="79.5" stroke="#555" stroke-width="1" />
<line x1="1631.5" y1="84.5" x2="1649.5" y2="84.5" stroke="#555" stroke-width="1" />
<line x1="1634" y1="67" x2="1638" y2="67" stroke="#555" stroke-width="1" />
<line x1="1634" y1="72" x2="1638" y2="72" stroke="#555" stroke-width="1" />
<line x1="1634" y1="77" x2="1638" y2="77" stroke="#a08a70" stroke-width="1" />
<line x1="1643" y1="77" x2="1647" y2="77" stroke="#a08a70" stroke-width="1" />
<line x1="1634" y1="82" x2="1638" y2="82" stroke="#555" stroke-width="1" />
<line x1="1634" y1="87" x2="1638" y2="87" stroke="#a08a70" stroke-width="1" />
<line x1="1643" y1="87" x2="1647" y2="87" stroke="#a08a70" stroke-width="1" />
<text x="1614.50" y="108.20" font-size="12" fill="#444444" textLength="43.50" lengthAdjust="spacingAndGlyphs"  >Subtotal</text>
<line x1="1672" y1="63.5" x2="1680" y2="63.5" stroke="#c0c0c0" stroke-width="1" />
<line x1="1672" y1="67.5" x2="1680" y2="67.5" stroke="#c0c0c0" stroke-width="1" />
<line x1="1672" y1="71.5" x2="1680" y2="71.5" stroke="#c0c0c0" stroke-width="1" />
<line x1="1672" y1="75.5" x2="1680" y2="75.5" stroke="#c0c0c0" stroke-width="1" />
<line x1="1672" y1="86.5" x2="1680" y2="86.5" stroke="#c0c0c0" stroke-width="1" />
<line x1="1672" y1="90.5" x2="1680" y2="90.5" stroke="#c0c0c0" stroke-width="1" />
<line x1="1672" y1="94.5" x2="1680" y2="94.5" stroke="#c0c0c0" stroke-width="1" />
<line x1="1672" y1="98.5" x2="1680" y2="98.5" stroke="#c0c0c0" stroke-width="1" />
<path d="M1666 64 h5 M1668.5 61.5 v5" fill="none" stroke="#c0c0c0" stroke-width="1.2" />
<line x1="1666" y1="87" x2="1671" y2="87" stroke="#c0c0c0" stroke-width="1.2" />
<text x="1683.75" y="73.70" font-size="12" fill="#a3a3a3" textLength="79.25" lengthAdjust="spacingAndGlyphs"  >Mostrar detalle</text>
<text x="1683.75" y="96.50" font-size="12" fill="#a3a3a3" textLength="77.00" lengthAdjust="spacingAndGlyphs"  >Ocultar detalle</text>
<text x="1603.75" y="143.30" font-size="12" fill="#555555" textLength="45.75" lengthAdjust="spacingAndGlyphs"  >Esquema</text>
<path d="M1762.5 138.5 h6 v6 h-6 z" fill="none" stroke="#8a8a8a" stroke-width="0.8" />
<path d="M1763.5 139.5 l4 4 M1767.5 141 v2.5 h-2.5" fill="none" stroke="#8a8a8a" stroke-width="0.9" />
<line x1="1773.5" y1="64" x2="1773.5" y2="143" stroke="#dadada" stroke-width="1" />
<path d="M1900.5 142 l4 -4 l4 4" fill="none" stroke="#555" stroke-width="1.4" />
<rect x="0" y="148" width="1918" height="636" fill="#e6e6e6" />
<rect x="3.5" y="158.5" width="101" height="25" fill="#ffffff" stroke="#c6c6c6" stroke-width="1" />
<text x="10.30" y="175.70" font-size="13.5" fill="#333333" textLength="15.40" lengthAdjust="spacingAndGlyphs"  >D2</text>
<path d="M90 169.5 h7.5 l-3.75 3.75 z" fill="#777777" />
<circle cx="119.5" cy="166" r="0.9" fill="#a8a8a8"/>
<circle cx="119.5" cy="171" r="0.9" fill="#a8a8a8"/>
<circle cx="119.5" cy="176" r="0.9" fill="#a8a8a8"/>
<rect x="135.5" y="158.5" width="108.5" height="25" fill="#ffffff" stroke="#c6c6c6" stroke-width="1" />
<path d="M148.5 166 l10 10 M158.5 166 l-10 10" fill="none" stroke="#b0b0b0" stroke-width="1.1" />
<path d="M183.5 171 l4 4.5 l9 -9.5" fill="none" stroke="#b0b0b0" stroke-width="1.1" />
<text x="220.00" y="176.00" font-size="13" fill="#666666" textLength="11.70" lengthAdjust="spacingAndGlyphs"  font-style="italic" font-family="Liberation Serif, serif">fx</text>
<rect x="248.5" y="158.5" width="1663.5" height="25" fill="#ffffff" stroke="#c6c6c6" stroke-width="1" />
<text x="260.00" y="175.70" font-size="14" fill="#222222" textLength="123.30" lengthAdjust="spacingAndGlyphs"  >20/07/2016  12:13:26</text>
<path d="M1901.2 169.5 l3.3 3.5 l3.3 -3.5" fill="none" stroke="#b8b8b8" stroke-width="1.3" />
<rect x="23" y="213" width="1873" height="571" fill="#ffffff" />
<rect x="431" y="253" width="134" height="380" fill="#c6c6c6" />
<line x1="23" y1="233.5" x2="1896" y2="233.5" stroke="#d0d0d0" stroke-width="1" />
<line x1="23" y1="253.5" x2="1896" y2="253.5" stroke="#d0d0d0" stroke-width="1" />
<line x1="23" y1="273.5" x2="1896" y2="273.5" stroke="#d0d0d0" stroke-width="1" />
<line x1="23" y1="293.5" x2="1896" y2="293.5" stroke="#d0d0d0" stroke-width="1" />
<line x1="23" y1="313.5" x2="1896" y2="313.5" stroke="#d0d0d0" stroke-width="1" />
<line x1="23" y1="333.5" x2="1896" y2="333.5" stroke="#d0d0d0" stroke-width="1" />
<line x1="23" y1="353.5" x2="1896" y2="353.5" stroke="#d0d0d0" stroke-width="1" />
<line x1="23" y1="373.5" x2="1896" y2="373.5" stroke="#d0d0d0" stroke-width="1" />
<line x1="23" y1="393.5" x2="1896" y2="393.5" stroke="#d0d0d0" stroke-width="1" />
<line x1="23" y1="413.5" x2="1896" y2="413.5" stroke="#d0d0d0" stroke-width="1" />
<line x1="23" y1="433.5" x2="1896" y2="433.5" stroke="#d0d0d0" stroke-width="1" />
<line x1="23" y1="453.5" x2="1896" y2="453.5" stroke="#d0d0d0" stroke-width="1" />
<line x1="23" y1="473.5" x2="1896" y2="473.5" stroke="#d0d0d0" stroke-width="1" />
<line x1="23" y1="493.5" x2="1896" y2="493.5" stroke="#d0d0d0" stroke-width="1" />
<line x1="23" y1="513.5" x2="1896" y2="513.5" stroke="#d0d0d0" stroke-width="1" />
<line x1="23" y1="533.5" x2="1896" y2="533.5" stroke="#d0d0d0" stroke-width="1" />
<line x1="23" y1="553.5" x2="1896" y2="553.5" stroke="#d0d0d0" stroke-width="1" />
<line x1="23" y1="573.5" x2="1896" y2="573.5" stroke="#d0d0d0" stroke-width="1" />
<line x1="23" y1="593.5" x2="1896" y2="593.5" stroke="#d0d0d0" stroke-width="1" />
<line x1="23" y1="613.5" x2="1896" y2="613.5" stroke="#d0d0d0" stroke-width="1" />
<line x1="23" y1="633.5" x2="1896" y2="633.5" stroke="#d0d0d0" stroke-width="1" />
<line x1="23" y1="653.5" x2="1896" y2="653.5" stroke="#d0d0d0" stroke-width="1" />
<line x1="23" y1="673.5" x2="1896" y2="673.5" stroke="#d0d0d0" stroke-width="1" />
<line x1="23" y1="693.5" x2="1896" y2="693.5" stroke="#d0d0d0" stroke-width="1" />
<line x1="23" y1="713.5" x2="1896" y2="713.5" stroke="#d0d0d0" stroke-width="1" />
<line x1="23" y1="733.5" x2="1896" y2="733.5" stroke="#d0d0d0" stroke-width="1" />
<line x1="23" y1="753.5" x2="1896" y2="753.5" stroke="#d0d0d0" stroke-width="1" />
<line x1="23" y1="773.5" x2="1896" y2="773.5" stroke="#d0d0d0" stroke-width="1" />
<line x1="87.5" y1="213" x2="87.5" y2="784" stroke="#d0d0d0" stroke-width="1" />
<line x1="243.5" y1="213" x2="243.5" y2="784" stroke="#d0d0d0" stroke-width="1" />
<line x1="430.5" y1="213" x2="430.5" y2="784" stroke="#d0d0d0" stroke-width="1" />
<line x1="566.0" y1="213" x2="566.0" y2="784" stroke="#d0d0d0" stroke-width="1" />
<line x1="700.5" y1="213" x2="700.5" y2="784" stroke="#d0d0d0" stroke-width="1" />
<line x1="853.5" y1="213" x2="853.5" y2="784" stroke="#d0d0d0" stroke-width="1" />
<line x1="1049.5" y1="213" x2="1049.5" y2="784" stroke="#d0d0d0" stroke-width="1" />
<line x1="1240.5" y1="213" x2="1240.5" y2="784" stroke="#d0d0d0" stroke-width="1" />
<line x1="1324.5" y1="213" x2="1324.5" y2="784" stroke="#d0d0d0" stroke-width="1" />
<line x1="1408.5" y1="213" x2="1408.5" y2="784" stroke="#d0d0d0" stroke-width="1" />
<line x1="1499.5" y1="213" x2="1499.5" y2="784" stroke="#d0d0d0" stroke-width="1" />
<line x1="1620.5" y1="213" x2="1620.5" y2="784" stroke="#d0d0d0" stroke-width="1" />
<line x1="1780.5" y1="213" x2="1780.5" y2="784" stroke="#d0d0d0" stroke-width="1" />
<line x1="431" y1="253.5" x2="565" y2="253.5" stroke="#b3b3b3" stroke-width="1" />
<line x1="431" y1="273.5" x2="565" y2="273.5" stroke="#b3b3b3" stroke-width="1" />
<line x1="431" y1="293.5" x2="565" y2="293.5" stroke="#b3b3b3" stroke-width="1" />
<line x1="431" y1="313.5" x2="565" y2="313.5" stroke="#b3b3b3" stroke-width="1" />
<line x1="431" y1="333.5" x2="565" y2="333.5" stroke="#b3b3b3" stroke-width="1" />
<line x1="431" y1="353.5" x2="565" y2="353.5" stroke="#b3b3b3" stroke-width="1" />
<line x1="431" y1="373.5" x2="565" y2="373.5" stroke="#b3b3b3" stroke-width="1" />
<line x1="431" y1="393.5" x2="565" y2="393.5" stroke="#b3b3b3" stroke-width="1" />
<line x1="431" y1="413.5" x2="565" y2="413.5" stroke="#b3b3b3" stroke-width="1" />
<line x1="431" y1="433.5" x2="565" y2="433.5" stroke="#b3b3b3" stroke-width="1" />
<line x1="431" y1="453.5" x2="565" y2="453.5" stroke="#b3b3b3" stroke-width="1" />
<line x1="431" y1="473.5" x2="565" y2="473.5" stroke="#b3b3b3" stroke-width="1" />
<line x1="431" y1="493.5" x2="565" y2="493.5" stroke="#b3b3b3" stroke-width="1" />
<line x1="431" y1="513.5" x2="565" y2="513.5" stroke="#b3b3b3" stroke-width="1" />
<line x1="431" y1="533.5" x2="565" y2="533.5" stroke="#b3b3b3" stroke-width="1" />
<line x1="431" y1="553.5" x2="565" y2="553.5" stroke="#b3b3b3" stroke-width="1" />
<line x1="431" y1="573.5" x2="565" y2="573.5" stroke="#b3b3b3" stroke-width="1" />
<line x1="431" y1="593.5" x2="565" y2="593.5" stroke="#b3b3b3" stroke-width="1" />
<line x1="431" y1="613.5" x2="565" y2="613.5" stroke="#b3b3b3" stroke-width="1" />
<line x1="23.5" y1="196" x2="23.5" y2="213" stroke="#c8c8c8" stroke-width="1" />
<line x1="87.5" y1="196" x2="87.5" y2="213" stroke="#c8c8c8" stroke-width="1" />
<line x1="243.5" y1="196" x2="243.5" y2="213" stroke="#c8c8c8" stroke-width="1" />
<rect x="430" y="193" width="135.5" height="20" fill="#d2d2d2" />
<line x1="566.0" y1="196" x2="566.0" y2="213" stroke="#c8c8c8" stroke-width="1" />
<line x1="700.5" y1="196" x2="700.5" y2="213" stroke="#c8c8c8" stroke-width="1" />
<line x1="853.5" y1="196" x2="853.5" y2="213" stroke="#c8c8c8" stroke-width="1" />
<line x1="1049.5" y1="196" x2="1049.5" y2="213" stroke="#c8c8c8" stroke-width="1" />
<line x1="1240.5" y1="196" x2="1240.5" y2="213" stroke="#c8c8c8" stroke-width="1" />
<line x1="1324.5" y1="196" x2="1324.5" y2="213" stroke="#c8c8c8" stroke-width="1" />
<line x1="1408.5" y1="196" x2="1408.5" y2="213" stroke="#c8c8c8" stroke-width="1" />
<line x1="1499.5" y1="196" x2="1499.5" y2="213" stroke="#c8c8c8" stroke-width="1" />
<line x1="1620.5" y1="196" x2="1620.5" y2="213" stroke="#c8c8c8" stroke-width="1" />
<line x1="1780.5" y1="196" x2="1780.5" y2="213" stroke="#c8c8c8" stroke-width="1" />
<text x="55.00" y="209.50" font-size="12.5" fill="#333333" text-anchor="middle"  >A</text>
<text x="165.00" y="209.50" font-size="12.5" fill="#333333" text-anchor="middle"  >B</text>
<text x="336.50" y="209.50" font-size="12.5" fill="#333333" text-anchor="middle"  >C</text>
<text x="497.75" y="209.50" font-size="12.5" fill="#1e6b41" text-anchor="middle"  >D</text>
<text x="632.75" y="209.50" font-size="12.5" fill="#333333" text-anchor="middle"  >E</text>
<text x="776.50" y="209.50" font-size="12.5" fill="#333333" text-anchor="middle"  >F</text>
<text x="951.00" y="209.50" font-size="12.5" fill="#333333" text-anchor="middle"  >G</text>
<text x="1144.50" y="209.50" font-size="12.5" fill="#333333" text-anchor="middle"  >H</text>
<text x="1282.00" y="209.50" font-size="12.5" fill="#333333" text-anchor="middle"  >I</text>
<text x="1366.00" y="209.50" font-size="12.5" fill="#333333" text-anchor="middle"  >J</text>
<text x="1453.50" y="209.50" font-size="12.5" fill="#333333" text-anchor="middle"  >K</text>
<text x="1559.50" y="209.50" font-size="12.5" fill="#333333" text-anchor="middle"  >L</text>
<text x="1700.00" y="209.50" font-size="12.5" fill="#333333" text-anchor="middle"  >M</text>
<text x="1874.00" y="209.50" font-size="12.5" fill="#333333" text-anchor="middle"  >N</text>
<line x1="566.0" y1="196" x2="566.0" y2="213" stroke="#c8c8c8" stroke-width="1" />
<line x1="23" y1="213.5" x2="1896" y2="213.5" stroke="#ababab" stroke-width="1" />
<rect x="430" y="211.5" width="135.5" height="2" fill="#217346" />
<path d="M9 209.5 h11 v-11 z" fill="#b7b7b7" />
<line x1="23.5" y1="193" x2="23.5" y2="784" stroke="#ababab" stroke-width="1" />
<rect x="0" y="233" width="23" height="400" fill="#d2d2d2" />
<text x="11.70" y="228.70" font-size="12" fill="#333333" text-anchor="middle"  >1</text>
<line x1="0" y1="233.5" x2="23" y2="233.5" stroke="#c8c8c8" stroke-width="1" />
<text x="11.70" y="248.70" font-size="12" fill="#2a5c40" text-anchor="middle"  >2</text>
<line x1="0" y1="253.5" x2="23" y2="253.5" stroke="#c0c0c0" stroke-width="1" />
<text x="11.70" y="268.70" font-size="12" fill="#2a5c40" text-anchor="middle"  >3</text>
<line x1="0" y1="273.5" x2="23" y2="273.5" stroke="#c0c0c0" stroke-width="1" />
<text x="11.70" y="288.70" font-size="12" fill="#2a5c40" text-anchor="middle"  >4</text>
<line x1="0" y1="293.5" x2="23" y2="293.5" stroke="#c0c0c0" stroke-width="1" />
<text x="11.70" y="308.70" font-size="12" fill="#2a5c40" text-anchor="middle"  >5</text>
<line x1="0" y1="313.5" x2="23" y2="313.5" stroke="#c0c0c0" stroke-width="1" />
<text x="11.70" y="328.70" font-size="12" fill="#2a5c40" text-anchor="middle"  >6</text>
<line x1="0" y1="333.5" x2="23" y2="333.5" stroke="#c0c0c0" stroke-width="1" />
<text x="11.70" y="348.70" font-size="12" fill="#2a5c40" text-anchor="middle"  >7</text>
<line x1="0" y1="353.5" x2="23" y2="353.5" stroke="#c0c0c0" stroke-width="1" />
<text x="11.70" y="368.70" font-size="12" fill="#2a5c40" text-anchor="middle"  >8</text>
<line x1="0" y1="373.5" x2="23" y2="373.5" stroke="#c0c0c0" stroke-width="1" />
<text x="11.70" y="388.70" font-size="12" fill="#2a5c40" text-anchor="middle"  >9</text>
<line x1="0" y1="393.5" x2="23" y2="393.5" stroke="#c0c0c0" stroke-width="1" />
<text x="11.70" y="408.70" font-size="12" fill="#2a5c40" text-anchor="middle"  >10</text>
<line x1="0" y1="413.5" x2="23" y2="413.5" stroke="#c0c0c0" stroke-width="1" />
<text x="11.70" y="428.70" font-size="12" fill="#2a5c40" text-anchor="middle"  >11</text>
<line x1="0" y1="433.5" x2="23" y2="433.5" stroke="#c0c0c0" stroke-width="1" />
<text x="11.70" y="448.70" font-size="12" fill="#2a5c40" text-anchor="middle"  >12</text>
<line x1="0" y1="453.5" x2="23" y2="453.5" stroke="#c0c0c0" stroke-width="1" />
<text x="11.70" y="468.70" font-size="12" fill="#2a5c40" text-anchor="middle"  >13</text>
<line x1="0" y1="473.5" x2="23" y2="473.5" stroke="#c0c0c0" stroke-width="1" />
<text x="11.70" y="488.70" font-size="12" fill="#2a5c40" text-anchor="middle"  >14</text>
<line x1="0" y1="493.5" x2="23" y2="493.5" stroke="#c0c0c0" stroke-width="1" />
<text x="11.70" y="508.70" font-size="12" fill="#2a5c40" text-anchor="middle"  >15</text>
<line x1="0" y1="513.5" x2="23" y2="513.5" stroke="#c0c0c0" stroke-width="1" />
<text x="11.70" y="528.70" font-size="12" fill="#2a5c40" text-anchor="middle"  >16</text>
<line x1="0" y1="533.5" x2="23" y2="533.5" stroke="#c0c0c0" stroke-width="1" />
<text x="11.70" y="548.70" font-size="12" fill="#2a5c40" text-anchor="middle"  >17</text>
<line x1="0" y1="553.5" x2="23" y2="553.5" stroke="#c0c0c0" stroke-width="1" />
<text x="11.70" y="568.70" font-size="12" fill="#2a5c40" text-anchor="middle"  >18</text>
<line x1="0" y1="573.5" x2="23" y2="573.5" stroke="#c0c0c0" stroke-width="1" />
<text x="11.70" y="588.70" font-size="12" fill="#2a5c40" text-anchor="middle"  >19</text>
<line x1="0" y1="593.5" x2="23" y2="593.5" stroke="#c0c0c0" stroke-width="1" />
<text x="11.70" y="608.70" font-size="12" fill="#2a5c40" text-anchor="middle"  >20</text>
<line x1="0" y1="613.5" x2="23" y2="613.5" stroke="#c0c0c0" stroke-width="1" />
<text x="11.70" y="628.70" font-size="12" fill="#2a5c40" text-anchor="middle"  >21</text>
<line x1="0" y1="633.5" x2="23" y2="633.5" stroke="#c8c8c8" stroke-width="1" />
<text x="11.70" y="648.70" font-size="12" fill="#333333" text-anchor="middle"  >22</text>
<line x1="0" y1="653.5" x2="23" y2="653.5" stroke="#c8c8c8" stroke-width="1" />
<text x="11.70" y="668.70" font-size="12" fill="#333333" text-anchor="middle"  >23</text>
<line x1="0" y1="673.5" x2="23" y2="673.5" stroke="#c8c8c8" stroke-width="1" />
<text x="11.70" y="688.70" font-size="12" fill="#333333" text-anchor="middle"  >24</text>
<line x1="0" y1="693.5" x2="23" y2="693.5" stroke="#c8c8c8" stroke-width="1" />
<text x="11.70" y="708.70" font-size="12" fill="#333333" text-anchor="middle"  >25</text>
<line x1="0" y1="713.5" x2="23" y2="713.5" stroke="#c8c8c8" stroke-width="1" />
<text x="11.70" y="728.70" font-size="12" fill="#333333" text-anchor="middle"  >26</text>
<line x1="0" y1="733.5" x2="23" y2="733.5" stroke="#c8c8c8" stroke-width="1" />
<text x="11.70" y="748.70" font-size="12" fill="#333333" text-anchor="middle"  >27</text>
<line x1="0" y1="753.5" x2="23" y2="753.5" stroke="#c8c8c8" stroke-width="1" />
<text x="11.70" y="768.70" font-size="12" fill="#333333" text-anchor="middle"  >28</text>
<line x1="0" y1="773.5" x2="23" y2="773.5" stroke="#c8c8c8" stroke-width="1" />
<text x="11.70" y="788.70" font-size="12" fill="#333333" text-anchor="middle"  >29</text>
<rect x="22" y="233" width="2" height="400" fill="#217346" />
<line x1="1896.5" y1="213" x2="1896.5" y2="784" stroke="#9a9a9a" stroke-width="1" />
<rect x="1900.5" y="196.5" width="14" height="784" fill="#ffffff" stroke="#c6c6c6" stroke-width="1" />
<line x1="1900.5" y1="211.5" x2="1914.5" y2="211.5" stroke="#9a9a9a" stroke-width="1.2" />
<path d="M1904.5 205 l3.5 -3.5 l3.5 3.5 z" fill="#777777" />
<text x="25.60" y="228.50" font-size="13.5" fill="#000000" textLength="11.72" lengthAdjust="spacingAndGlyphs"  stroke="#000" stroke-width="0.1">Id</text>
<text x="89.60" y="228.50" font-size="13.5" fill="#000000" textLength="33.46" lengthAdjust="spacingAndGlyphs"  stroke="#000" stroke-width="0.1">Email</text>
<text x="245.60" y="228.50" font-size="13.5" fill="#000000" textLength="94.38" lengthAdjust="spacingAndGlyphs"  stroke="#000" stroke-width="0.1">Familia clientes</text>
<text x="432.60" y="228.50" font-size="13.5" fill="#000000" textLength="91.22" lengthAdjust="spacingAndGlyphs"  stroke="#000" stroke-width="0.1">Fecha creacion</text>
<text x="568.10" y="228.50" font-size="13.5" fill="#000000" textLength="85.10" lengthAdjust="spacingAndGlyphs"  stroke="#000" stroke-width="0.1">Hora creacion</text>
<text x="702.60" y="228.50" font-size="13.5" fill="#000000" textLength="50.06" lengthAdjust="spacingAndGlyphs"  stroke="#000" stroke-width="0.1">Nombre</text>
<text x="855.60" y="228.50" font-size="13.5" fill="#000000" textLength="99.51" lengthAdjust="spacingAndGlyphs"  stroke="#000" stroke-width="0.1">Nombre jurídico</text>
<text x="1051.60" y="228.50" font-size="13.5" fill="#000000" textLength="57.48" lengthAdjust="spacingAndGlyphs"  stroke="#000" stroke-width="0.1">Dirección</text>
<text x="1242.60" y="228.50" font-size="13.5" fill="#000000" textLength="57.76" lengthAdjust="spacingAndGlyphs"  stroke="#000" stroke-width="0.1">Localidad</text>
<text x="1326.60" y="228.50" font-size="13.5" fill="#000000" textLength="56.17" lengthAdjust="spacingAndGlyphs"  stroke="#000" stroke-width="0.1">Provincia</text>
<text x="1410.60" y="228.50" font-size="13.5" fill="#000000" textLength="83.18" lengthAdjust="spacingAndGlyphs"  stroke="#000" stroke-width="0.1">Código postal</text>
<text x="1501.60" y="228.50" font-size="13.5" fill="#000000" textLength="54.07" lengthAdjust="spacingAndGlyphs"  stroke="#000" stroke-width="0.1">Teléfono</text>
<text x="1622.60" y="228.50" font-size="13.5" fill="#000000" textLength="151.31" lengthAdjust="spacingAndGlyphs"  stroke="#000" stroke-width="0.1">Nombre cuenta bancaria</text>
<text x="1782.60" y="228.50" font-size="13.5" fill="#000000" textLength="99.41" lengthAdjust="spacingAndGlyphs"  stroke="#000" stroke-width="0.1">Cuenta bancaria</text>
<text x="76.80" y="248.50" font-size="13.5" fill="#000000" textLength="7.00" lengthAdjust="spacingAndGlyphs"  stroke="#000" stroke-width="0.1">1</text>
<text x="245.60" y="248.50" font-size="13.5" fill="#000000" textLength="92.36" lengthAdjust="spacingAndGlyphs"  stroke="#000" stroke-width="0.1">Clientes finales</text>
<text x="459.10" y="248.50" font-size="13.5" fill="#000000" textLength="103.20" lengthAdjust="spacingAndGlyphs"  stroke="#000" stroke-width="0.1">20/07/2016 12:13</text>
<text x="702.60" y="248.50" font-size="13.5" fill="#000000" textLength="25.19" lengthAdjust="spacingAndGlyphs"  stroke="#000" stroke-width="0.1">Mar</text>
<text x="1326.60" y="248.50" font-size="13.5" fill="#000000" textLength="41.98" lengthAdjust="spacingAndGlyphs"  stroke="#000" stroke-width="0.1">Toledo</text>
<text x="1410.60" y="248.50" font-size="13.5" fill="#000000" textLength="35.00" lengthAdjust="spacingAndGlyphs"  stroke="#000" stroke-width="0.1">45004</text>
<text x="1501.60" y="248.50" font-size="13.5" fill="#000000" textLength="63.00" lengthAdjust="spacingAndGlyphs"  stroke="#000" stroke-width="0.1">925874698</text>
<text x="1622.60" y="248.50" font-size="13.5" fill="#000000" textLength="71.17" lengthAdjust="spacingAndGlyphs"  stroke="#000" stroke-width="0.1">CAIXABANK</text>
<path d="M1409 234 h6 l-6 6 z" fill="#207040" />
<path d="M1500 234 h6 l-6 6 z" fill="#207040" />
<text x="76.80" y="268.50" font-size="13.5" fill="#000000" textLength="7.00" lengthAdjust="spacingAndGlyphs"  stroke="#000" stroke-width="0.1">2</text>
<text x="245.60" y="268.50" font-size="13.5" fill="#000000" textLength="92.36" lengthAdjust="spacingAndGlyphs"  stroke="#000" stroke-width="0.1">Clientes finales</text>
<text x="459.10" y="268.50" font-size="13.5" fill="#000000" textLength="103.20" lengthAdjust="spacingAndGlyphs"  stroke="#000" stroke-width="0.1">20/07/2016 13:16</text>
<text x="702.60" y="268.50" font-size="13.5" fill="#000000" textLength="20.16" lengthAdjust="spacingAndGlyphs"  stroke="#000" stroke-width="0.1">Luz</text>
<text x="1326.60" y="268.50" font-size="13.5" fill="#000000" textLength="49.66" lengthAdjust="spacingAndGlyphs"  stroke="#000" stroke-width="0.1">Alicante</text>
<text x="1410.60" y="268.50" font-size="13.5" fill="#000000" textLength="35.00" lengthAdjust="spacingAndGlyphs"  stroke="#000" stroke-width="0.1">03202</text>
<text x="1501.60" y="268.50" font-size="13.5" fill="#000000" textLength="63.00" lengthAdjust="spacingAndGlyphs"  stroke="#000" stroke-width="0.1">960458789</text>
<text x="1622.60" y="268.50" font-size="13.5" fill="#000000" textLength="123.27" lengthAdjust="spacingAndGlyphs"  stroke="#000" stroke-width="0.1">BANCO SANTANDER</text>
<path d="M1409 254 h6 l-6 6 z" fill="#207040" />
<path d="M1500 254 h6 l-6 6 z" fill="#207040" />
<text x="76.80" y="288.50" font-size="13.5" fill="#000000" textLength="7.00" lengthAdjust="spacingAndGlyphs"  stroke="#000" stroke-width="0.1">3</text>
<text x="245.60" y="288.50" font-size="13.5" fill="#000000" textLength="92.36" lengthAdjust="spacingAndGlyphs"  stroke="#000" stroke-width="0.1">Clientes finales</text>
<text x="459.10" y="288.50" font-size="13.5" fill="#000000" textLength="103.20" lengthAdjust="spacingAndGlyphs"  stroke="#000" stroke-width="0.1">20/07/2016 15:45</text>
<text x="702.60" y="288.50" font-size="13.5" fill="#000000" textLength="69.72" lengthAdjust="spacingAndGlyphs"  stroke="#000" stroke-width="0.1">Todo y más</text>
<text x="1326.60" y="288.50" font-size="13.5" fill="#000000" textLength="44.46" lengthAdjust="spacingAndGlyphs"  stroke="#000" stroke-width="0.1">Madrid</text>
<text x="1410.60" y="288.50" font-size="13.5" fill="#000000" textLength="35.00" lengthAdjust="spacingAndGlyphs"  stroke="#000" stroke-width="0.1">28021</text>
<text x="1501.60" y="288.50" font-size="13.5" fill="#000000" textLength="63.00" lengthAdjust="spacingAndGlyphs"  stroke="#000" stroke-width="0.1">968784119</text>
<text x="1622.60" y="288.50" font-size="13.5" fill="#000000" textLength="123.27" lengthAdjust="spacingAndGlyphs"  stroke="#000" stroke-width="0.1">BANCO SANTANDER</text>
<path d="M1409 274 h6 l-6 6 z" fill="#207040" />
<path d="M1500 274 h6 l-6 6 z" fill="#207040" />
<text x="76.80" y="308.50" font-size="13.5" fill="#000000" textLength="7.00" lengthAdjust="spacingAndGlyphs"  stroke="#000" stroke-width="0.1">4</text>
<text x="245.60" y="308.50" font-size="13.5" fill="#000000" textLength="92.36" lengthAdjust="spacingAndGlyphs"  stroke="#000" stroke-width="0.1">Clientes finales</text>
<text x="459.10" y="308.50" font-size="13.5" fill="#000000" textLength="103.20" lengthAdjust="spacingAndGlyphs"  stroke="#000" stroke-width="0.1">21/07/2016 13:20</text>
<text x="702.60" y="308.50" font-size="13.5" fill="#000000" textLength="50.22" lengthAdjust="spacingAndGlyphs"  stroke="#000" stroke-width="0.1">Guzmán</text>
<text x="1326.60" y="308.50" font-size="13.5" fill="#000000" textLength="49.66" lengthAdjust="spacingAndGlyphs"  stroke="#000" stroke-width="0.1">Alicante</text>
<text x="1410.60" y="308.50" font-size="13.5" fill="#000000" textLength="35.00" lengthAdjust="spacingAndGlyphs"  stroke="#000" stroke-width="0.1">03160</text>
<text x="1501.60" y="308.50" font-size="13.5" fill="#000000" textLength="63.00" lengthAdjust="spacingAndGlyphs"  stroke="#000" stroke-width="0.1">654745812</text>
<text x="1622.60" y="308.50" font-size="13.5" fill="#000000" textLength="123.27" lengthAdjust="spacingAndGlyphs"  stroke="#000" stroke-width="0.1">BANCO SANTANDER</text>
<path d="M1409 294 h6 l-6 6 z" fill="#207040" />
<path d="M1500 294 h6 l-6 6 z" fill="#207040" />
<text x="76.80" y="328.50" font-size="13.5" fill="#000000" textLength="7.00" lengthAdjust="spacingAndGlyphs"  stroke="#000" stroke-width="0.1">5</text>
<text x="245.60" y="328.50" font-size="13.5" fill="#000000" textLength="92.36" lengthAdjust="spacingAndGlyphs"  stroke="#000" stroke-width="0.1">Clientes finales</text>
<text x="459.10" y="328.50" font-size="13.5" fill="#000000" textLength="103.20" lengthAdjust="spacingAndGlyphs"  stroke="#000" stroke-width="0.1">21/07/2016 16:13</text>
<text x="702.60" y="328.50" font-size="13.5" fill="#000000" textLength="39.64" lengthAdjust="spacingAndGlyphs"  stroke="#000" stroke-width="0.1">Dentix</text>
<text x="1326.60" y="328.50" font-size="13.5" fill="#000000" textLength="53.61" lengthAdjust="spacingAndGlyphs"  stroke="#000" stroke-width="0.1">Albacete</text>
<text x="1410.60" y="328.50" font-size="13.5" fill="#000000" textLength="35.00" lengthAdjust="spacingAndGlyphs"  stroke="#000" stroke-width="0.1">02008</text>
<text x="1501.60" y="328.50" font-size="13.5" fill="#000000" textLength="63.00" lengthAdjust="spacingAndGlyphs"  stroke="#000" stroke-width="0.1">967854125</text>
<text x="1622.60" y="328.50" font-size="13.5" fill="#000000" textLength="123.27" lengthAdjust="spacingAndGlyphs"  stroke="#000" stroke-width="0.1">BANCO SANTANDER</text>
<path d="M1409 314 h6 l-6 6 z" fill="#207040" />
<path d="M1500 314 h6 l-6 6 z" fill="#207040" />
<text x="76.80" y="348.50" font-size="13.5" fill="#000000" textLength="7.00" lengthAdjust="spacingAndGlyphs"  stroke="#000" stroke-width="0.1">6</text>
<text x="245.60" y="348.50" font-size="13.5" fill="#000000" textLength="92.36" lengthAdjust="spacingAndGlyphs"  stroke="#000" stroke-width="0.1">Clientes finales</text>
<text x="459.10" y="348.50" font-size="13.5" fill="#000000" textLength="103.20" lengthAdjust="spacingAndGlyphs"  stroke="#000" stroke-width="0.1">25/08/2016 17:33</text>
<text x="702.60" y="348.50" font-size="13.5" fill="#000000" textLength="50.59" lengthAdjust="spacingAndGlyphs"  stroke="#000" stroke-width="0.1">P. López</text>
<text x="1326.60" y="348.50" font-size="13.5" fill="#000000" textLength="44.46" lengthAdjust="spacingAndGlyphs"  stroke="#000" stroke-width="0.1">Madrid</text>
<text x="1410.60" y="348.50" font-size="13.5" fill="#000000" textLength="35.00" lengthAdjust="spacingAndGlyphs"  stroke="#000" stroke-width="0.1">28042</text>
<text x="1501.60" y="348.50" font-size="13.5" fill="#000000" textLength="63.00" lengthAdjust="spacingAndGlyphs"  stroke="#000" stroke-width="0.1">868745125</text>
<text x="1622.60" y="348.50" font-size="13.5" fill="#000000" textLength="71.17" lengthAdjust="spacingAndGlyphs"  stroke="#000" stroke-width="0.1">CAIXABANK</text>
<path d="M1409 334 h6 l-6 6 z" fill="#207040" />
<path d="M1500 334 h6 l-6 6 z" fill="#207040" />
<text x="76.80" y="368.50" font-size="13.5" fill="#000000" textLength="7.00" lengthAdjust="spacingAndGlyphs"  stroke="#000" stroke-width="0.1">7</text>
<text x="245.60" y="368.50" font-size="13.5" fill="#000000" textLength="92.36" lengthAdjust="spacingAndGlyphs"  stroke="#000" stroke-width="0.1">Clientes finales</text>
<text x="459.10" y="368.50" font-size="13.5" fill="#000000" textLength="103.20" lengthAdjust="spacingAndGlyphs"  stroke="#000" stroke-width="0.1">25/08/2016 09:13</text>
<text x="702.60" y="368.50" font-size="13.5" fill="#000000" textLength="36.61" lengthAdjust="spacingAndGlyphs"  stroke="#000" stroke-width="0.1">Marlo</text>
<text x="1326.60" y="368.50" font-size="13.5" fill="#000000" textLength="44.46" lengthAdjust="spacingAndGlyphs"  stroke="#000" stroke-width="0.1">Madrid</text>
<text x="1410.60" y="368.50" font-size="13.5" fill="#000000" textLength="35.00" lengthAdjust="spacingAndGlyphs"  stroke="#000" stroke-width="0.1">12006</text>
<text x="1501.60" y="368.50" font-size="13.5" fill="#000000" textLength="63.00" lengthAdjust="spacingAndGlyphs"  stroke="#000" stroke-width="0.1">800545741</text>
<text x="1622.60" y="368.50" font-size="13.5" fill="#000000" textLength="123.27" lengthAdjust="spacingAndGlyphs"  stroke="#000" stroke-width="0.1">BANCO SANTANDER</text>
<path d="M1409 354 h6 l-6 6 z" fill="#207040" />
<path d="M1500 354 h6 l-6 6 z" fill="#207040" />
<text x="76.80" y="388.50" font-size="13.5" fill="#000000" textLength="7.00" lengthAdjust="spacingAndGlyphs"  stroke="#000" stroke-width="0.1">8</text>
<text x="245.60" y="388.50" font-size="13.5" fill="#000000" textLength="92.36" lengthAdjust="spacingAndGlyphs"  stroke="#000" stroke-width="0.1">Clientes finales</text>
<text x="459.10" y="388.50" font-size="13.5" fill="#000000" textLength="103.20" lengthAdjust="spacingAndGlyphs"  stroke="#000" stroke-width="0.1">25/08/2016 18:22</text>
<text x="702.60" y="388.50" font-size="13.5" fill="#000000" textLength="46.58" lengthAdjust="spacingAndGlyphs"  stroke="#000" stroke-width="0.1">La Gota</text>
<text x="1326.60" y="388.50" font-size="13.5" fill="#000000" textLength="29.18" lengthAdjust="spacingAndGlyphs"  stroke="#000" stroke-width="0.1">Lugo</text>
<text x="1410.60" y="388.50" font-size="13.5" fill="#000000" textLength="35.00" lengthAdjust="spacingAndGlyphs"  stroke="#000" stroke-width="0.1">27200</text>
<text x="1501.60" y="388.50" font-size="13.5" fill="#000000" textLength="63.00" lengthAdjust="spacingAndGlyphs"  stroke="#000" stroke-width="0.1">982154789</text>
<text x="1622.60" y="388.50" font-size="13.5" fill="#000000" textLength="71.17" lengthAdjust="spacingAndGlyphs"  stroke="#000" stroke-width="0.1">CAIXABANK</text>
<path d="M1409 374 h6 l-6 6 z" fill="#207040" />
<path d="M1500 374 h6 l-6 6 z" fill="#207040" />
<text x="76.80" y="408.50" font-size="13.5" fill="#000000" textLength="7.00" lengthAdjust="spacingAndGlyphs"  stroke="#000" stroke-width="0.1">9</text>
<text x="245.60" y="408.50" font-size="13.5" fill="#000000" textLength="92.36" lengthAdjust="spacingAndGlyphs"  stroke="#000" stroke-width="0.1">Clientes finales</text>
<text x="459.10" y="408.50" font-size="13.5" fill="#000000" textLength="103.20" lengthAdjust="spacingAndGlyphs"  stroke="#000" stroke-width="0.1">25/09/2016 15:09</text>
<text x="702.60" y="408.50" font-size="13.5" fill="#000000" textLength="73.92" lengthAdjust="spacingAndGlyphs"  stroke="#000" stroke-width="0.1">Sol Canarias</text>
<text x="1326.60" y="408.50" font-size="13.5" fill="#000000" textLength="42.95" lengthAdjust="spacingAndGlyphs"  stroke="#000" stroke-width="0.1">Murcia</text>
<text x="1410.60" y="408.50" font-size="13.5" fill="#000000" textLength="35.00" lengthAdjust="spacingAndGlyphs"  stroke="#000" stroke-width="0.1">30007</text>
<text x="1501.60" y="408.50" font-size="13.5" fill="#000000" textLength="63.00" lengthAdjust="spacingAndGlyphs"  stroke="#000" stroke-width="0.1">868554712</text>
<text x="1622.60" y="408.50" font-size="13.5" fill="#000000" textLength="123.27" lengthAdjust="spacingAndGlyphs"  stroke="#000" stroke-width="0.1">BANCO SANTANDER</text>
<path d="M1409 394 h6 l-6 6 z" fill="#207040" />
<path d="M1500 394 h6 l-6 6 z" fill="#207040" />
<text x="69.80" y="428.50" font-size="13.5" fill="#000000" textLength="14.00" lengthAdjust="spacingAndGlyphs"  stroke="#000" stroke-width="0.1">10</text>
<text x="245.60" y="428.50" font-size="13.5" fill="#000000" textLength="92.36" lengthAdjust="spacingAndGlyphs"  stroke="#000" stroke-width="0.1">Clientes finales</text>
<text x="459.10" y="428.50" font-size="13.5" fill="#000000" textLength="103.20" lengthAdjust="spacingAndGlyphs"  stroke="#000" stroke-width="0.1">25/09/2016 15:12</text>
<text x="702.60" y="428.50" font-size="13.5" fill="#000000" textLength="57.57" lengthAdjust="spacingAndGlyphs"  stroke="#000" stroke-width="0.1">Mariposa</text>
<text x="1326.60" y="428.50" font-size="13.5" fill="#000000" textLength="42.95" lengthAdjust="spacingAndGlyphs"  stroke="#000" stroke-width="0.1">Murcia</text>
<text x="1410.60" y="428.50" font-size="13.5" fill="#000000" textLength="35.00" lengthAdjust="spacingAndGlyphs"  stroke="#000" stroke-width="0.1">30730</text>
<text x="1501.60" y="428.50" font-size="13.5" fill="#000000" textLength="63.00" lengthAdjust="spacingAndGlyphs"  stroke="#000" stroke-width="0.1">985647521</text>
<text x="1622.60" y="428.50" font-size="13.5" fill="#000000" textLength="71.17" lengthAdjust="spacingAndGlyphs"  stroke="#000" stroke-width="0.1">CAIXABANK</text>
<path d="M1409 414 h6 l-6 6 z" fill="#207040" />
<path d="M1500 414 h6 l-6 6 z" fill="#207040" />
<text x="69.80" y="448.50" font-size="13.5" fill="#000000" textLength="14.00" lengthAdjust="spacingAndGlyphs"  stroke="#000" stroke-width="0.1">11</text>
<text x="245.60" y="448.50" font-size="13.5" fill="#000000" textLength="92.36" lengthAdjust="spacingAndGlyphs"  stroke="#000" stroke-width="0.1">Clientes finales</text>
<text x="459.10" y="448.50" font-size="13.5" fill="#000000" textLength="103.20" lengthAdjust="spacingAndGlyphs"  stroke="#000" stroke-width="0.1">15/07/2017 13:13</text>
<text x="702.60" y="448.50" font-size="13.5" fill="#000000" textLength="60.89" lengthAdjust="spacingAndGlyphs"  stroke="#000" stroke-width="0.1">Ferretería</text>
<text x="1326.60" y="448.50" font-size="13.5" fill="#000000" textLength="42.95" lengthAdjust="spacingAndGlyphs"  stroke="#000" stroke-width="0.1">Murcia</text>
<text x="1410.60" y="448.50" font-size="13.5" fill="#000000" textLength="35.00" lengthAdjust="spacingAndGlyphs"  stroke="#000" stroke-width="0.1">30002</text>
<text x="1501.60" y="448.50" font-size="13.5" fill="#000000" textLength="63.00" lengthAdjust="spacingAndGlyphs"  stroke="#000" stroke-width="0.1">689875125</text>
<text x="1622.60" y="448.50" font-size="13.5" fill="#000000" textLength="71.17" lengthAdjust="spacingAndGlyphs"  stroke="#000" stroke-width="0.1">CAIXABANK</text>
<path d="M1409 434 h6 l-6 6 z" fill="#207040" />
<path d="M1500 434 h6 l-6 6 z" fill="#207040" />
<text x="69.80" y="468.50" font-size="13.5" fill="#000000" textLength="14.00" lengthAdjust="spacingAndGlyphs"  stroke="#000" stroke-width="0.1">12</text>
<text x="245.60" y="468.50" font-size="13.5" fill="#000000" textLength="92.36" lengthAdjust="spacingAndGlyphs"  stroke="#000" stroke-width="0.1">Clientes finales</text>
<text x="459.10" y="468.50" font-size="13.5" fill="#000000" textLength="103.20" lengthAdjust="spacingAndGlyphs"  stroke="#000" stroke-width="0.1">25/11/2017 09:13</text>
<text x="702.60" y="468.50" font-size="13.5" fill="#000000" textLength="45.08" lengthAdjust="spacingAndGlyphs"  stroke="#000" stroke-width="0.1">Lactalis</text>
<text x="1326.60" y="468.50" font-size="13.5" fill="#000000" textLength="44.46" lengthAdjust="spacingAndGlyphs"  stroke="#000" stroke-width="0.1">Madrid</text>
<text x="1410.60" y="468.50" font-size="13.5" fill="#000000" textLength="35.00" lengthAdjust="spacingAndGlyphs"  stroke="#000" stroke-width="0.1">28013</text>
<text x="1501.60" y="468.50" font-size="13.5" fill="#000000" textLength="63.00" lengthAdjust="spacingAndGlyphs"  stroke="#000" stroke-width="0.1">915487254</text>
<text x="1622.60" y="468.50" font-size="13.5" fill="#000000" textLength="123.27" lengthAdjust="spacingAndGlyphs"  stroke="#000" stroke-width="0.1">BANCO SANTANDER</text>
<path d="M1409 454 h6 l-6 6 z" fill="#207040" />
<path d="M1500 454 h6 l-6 6 z" fill="#207040" />
<text x="69.80" y="488.50" font-size="13.5" fill="#000000" textLength="14.00" lengthAdjust="spacingAndGlyphs"  stroke="#000" stroke-width="0.1">13</text>
<text x="245.60" y="488.50" font-size="13.5" fill="#000000" textLength="92.36" lengthAdjust="spacingAndGlyphs"  stroke="#000" stroke-width="0.1">Clientes finales</text>
<text x="459.10" y="488.50" font-size="13.5" fill="#000000" textLength="103.20" lengthAdjust="spacingAndGlyphs"  stroke="#000" stroke-width="0.1">25/11/2017 13:38</text>
<text x="702.60" y="488.50" font-size="13.5" fill="#000000" textLength="40.12" lengthAdjust="spacingAndGlyphs"  stroke="#000" stroke-width="0.1">Tit-Tat</text>
<text x="1326.60" y="488.50" font-size="13.5" fill="#000000" textLength="42.95" lengthAdjust="spacingAndGlyphs"  stroke="#000" stroke-width="0.1">Murcia</text>
<text x="1410.60" y="488.50" font-size="13.5" fill="#000000" textLength="35.00" lengthAdjust="spacingAndGlyphs"  stroke="#000" stroke-width="0.1">30820</text>
<text x="1501.60" y="488.50" font-size="13.5" fill="#000000" textLength="63.00" lengthAdjust="spacingAndGlyphs"  stroke="#000" stroke-width="0.1">968745125</text>
<text x="1622.60" y="488.50" font-size="13.5" fill="#000000" textLength="71.17" lengthAdjust="spacingAndGlyphs"  stroke="#000" stroke-width="0.1">CAIXABANK</text>
<path d="M1409 474 h6 l-6 6 z" fill="#207040" />
<path d="M1500 474 h6 l-6 6 z" fill="#207040" />
<text x="69.80" y="508.50" font-size="13.5" fill="#000000" textLength="14.00" lengthAdjust="spacingAndGlyphs"  stroke="#000" stroke-width="0.1">14</text>
<text x="245.60" y="508.50" font-size="13.5" fill="#000000" textLength="92.36" lengthAdjust="spacingAndGlyphs"  stroke="#000" stroke-width="0.1">Clientes finales</text>
<text x="459.10" y="508.50" font-size="13.5" fill="#000000" textLength="103.20" lengthAdjust="spacingAndGlyphs"  stroke="#000" stroke-width="0.1">30/11/2017 14:08</text>
<text x="702.60" y="508.50" font-size="13.5" fill="#000000" textLength="55.54" lengthAdjust="spacingAndGlyphs"  stroke="#000" stroke-width="0.1">In-Forma</text>
<text x="1326.60" y="508.50" font-size="13.5" fill="#000000" textLength="51.61" lengthAdjust="spacingAndGlyphs"  stroke="#000" stroke-width="0.1">Valencia</text>
<text x="1410.60" y="508.50" font-size="13.5" fill="#000000" textLength="35.00" lengthAdjust="spacingAndGlyphs"  stroke="#000" stroke-width="0.1">46113</text>
<text x="1501.60" y="508.50" font-size="13.5" fill="#000000" textLength="63.00" lengthAdjust="spacingAndGlyphs"  stroke="#000" stroke-width="0.1">968303040</text>
<text x="1622.60" y="508.50" font-size="13.5" fill="#000000" textLength="71.17" lengthAdjust="spacingAndGlyphs"  stroke="#000" stroke-width="0.1">CAIXABANK</text>
<path d="M1409 494 h6 l-6 6 z" fill="#207040" />
<path d="M1500 494 h6 l-6 6 z" fill="#207040" />
<text x="69.80" y="528.50" font-size="13.5" fill="#000000" textLength="14.00" lengthAdjust="spacingAndGlyphs"  stroke="#000" stroke-width="0.1">15</text>
<text x="245.60" y="528.50" font-size="13.5" fill="#000000" textLength="92.36" lengthAdjust="spacingAndGlyphs"  stroke="#000" stroke-width="0.1">Clientes finales</text>
<text x="459.10" y="528.50" font-size="13.5" fill="#000000" textLength="103.20" lengthAdjust="spacingAndGlyphs"  stroke="#000" stroke-width="0.1">02/12/2017 14:13</text>
<text x="702.60" y="528.50" font-size="13.5" fill="#000000" textLength="40.62" lengthAdjust="spacingAndGlyphs"  stroke="#000" stroke-width="0.1">Granja</text>
<text x="1326.60" y="528.50" font-size="13.5" fill="#000000" textLength="42.95" lengthAdjust="spacingAndGlyphs"  stroke="#000" stroke-width="0.1">Murcia</text>
<text x="1410.60" y="528.50" font-size="13.5" fill="#000000" textLength="35.00" lengthAdjust="spacingAndGlyphs"  stroke="#000" stroke-width="0.1">30565</text>
<text x="1501.60" y="528.50" font-size="13.5" fill="#000000" textLength="63.00" lengthAdjust="spacingAndGlyphs"  stroke="#000" stroke-width="0.1">968552415</text>
<text x="1622.60" y="528.50" font-size="13.5" fill="#000000" textLength="71.17" lengthAdjust="spacingAndGlyphs"  stroke="#000" stroke-width="0.1">CAIXABANK</text>
<path d="M1409 514 h6 l-6 6 z" fill="#207040" />
<path d="M1500 514 h6 l-6 6 z" fill="#207040" />
<text x="69.80" y="548.50" font-size="13.5" fill="#000000" textLength="14.00" lengthAdjust="spacingAndGlyphs"  stroke="#000" stroke-width="0.1">16</text>
<text x="245.60" y="548.50" font-size="13.5" fill="#000000" textLength="92.36" lengthAdjust="spacingAndGlyphs"  stroke="#000" stroke-width="0.1">Clientes finales</text>
<text x="459.10" y="548.50" font-size="13.5" fill="#000000" textLength="103.20" lengthAdjust="spacingAndGlyphs"  stroke="#000" stroke-width="0.1">02/12/2017 20:13</text>
<text x="702.60" y="548.50" font-size="13.5" fill="#000000" textLength="46.81" lengthAdjust="spacingAndGlyphs"  stroke="#000" stroke-width="0.1">Ernesto</text>
<text x="1326.60" y="548.50" font-size="13.5" fill="#000000" textLength="42.95" lengthAdjust="spacingAndGlyphs"  stroke="#000" stroke-width="0.1">Murcia</text>
<text x="1410.60" y="548.50" font-size="13.5" fill="#000000" textLength="35.00" lengthAdjust="spacingAndGlyphs"  stroke="#000" stroke-width="0.1">30500</text>
<text x="1501.60" y="548.50" font-size="13.5" fill="#000000" textLength="63.00" lengthAdjust="spacingAndGlyphs"  stroke="#000" stroke-width="0.1">968130235</text>
<text x="1622.60" y="548.50" font-size="13.5" fill="#000000" textLength="123.27" lengthAdjust="spacingAndGlyphs"  stroke="#000" stroke-width="0.1">BANCO SANTANDER</text>
<path d="M1409 534 h6 l-6 6 z" fill="#207040" />
<path d="M1500 534 h6 l-6 6 z" fill="#207040" />
<text x="69.80" y="568.50" font-size="13.5" fill="#000000" textLength="14.00" lengthAdjust="spacingAndGlyphs"  stroke="#000" stroke-width="0.1">17</text>
<text x="245.60" y="568.50" font-size="13.5" fill="#000000" textLength="122.40" lengthAdjust="spacingAndGlyphs"  stroke="#000" stroke-width="0.1">Clientes potenciales</text>
<text x="459.10" y="568.50" font-size="13.5" fill="#000000" textLength="103.20" lengthAdjust="spacingAndGlyphs"  stroke="#000" stroke-width="0.1">04/12/2017 12:16</text>
<text x="702.60" y="568.50" font-size="13.5" fill="#000000" textLength="70.23" lengthAdjust="spacingAndGlyphs"  stroke="#000" stroke-width="0.1">Maquinaria</text>
<text x="1326.60" y="568.50" font-size="13.5" fill="#000000" textLength="42.95" lengthAdjust="spacingAndGlyphs"  stroke="#000" stroke-width="0.1">Murcia</text>
<text x="1410.60" y="568.50" font-size="13.5" fill="#000000" textLength="35.00" lengthAdjust="spacingAndGlyphs"  stroke="#000" stroke-width="0.1">30330</text>
<text x="1501.60" y="568.50" font-size="13.5" fill="#000000" textLength="63.00" lengthAdjust="spacingAndGlyphs"  stroke="#000" stroke-width="0.1">968556556</text>
<text x="1622.60" y="568.50" font-size="13.5" fill="#000000" textLength="123.27" lengthAdjust="spacingAndGlyphs"  stroke="#000" stroke-width="0.1">BANCO SANTANDER</text>
<path d="M1409 554 h6 l-6 6 z" fill="#207040" />
<path d="M1500 554 h6 l-6 6 z" fill="#207040" />
<text x="69.80" y="588.50" font-size="13.5" fill="#000000" textLength="14.00" lengthAdjust="spacingAndGlyphs"  stroke="#000" stroke-width="0.1">18</text>
<text x="245.60" y="588.50" font-size="13.5" fill="#000000" textLength="122.40" lengthAdjust="spacingAndGlyphs"  stroke="#000" stroke-width="0.1">Clientes potenciales</text>
<text x="459.10" y="588.50" font-size="13.5" fill="#000000" textLength="103.20" lengthAdjust="spacingAndGlyphs"  stroke="#000" stroke-width="0.1">05/12/2017 13:55</text>
<text x="702.60" y="588.50" font-size="13.5" fill="#000000" textLength="53.21" lengthAdjust="spacingAndGlyphs"  stroke="#000" stroke-width="0.1">San Juan</text>
<text x="1326.60" y="588.50" font-size="13.5" fill="#000000" textLength="60.93" lengthAdjust="spacingAndGlyphs"  stroke="#000" stroke-width="0.1">Barcelona</text>
<text x="1410.60" y="588.50" font-size="13.5" fill="#000000" textLength="35.00" lengthAdjust="spacingAndGlyphs"  stroke="#000" stroke-width="0.1">08650</text>
<text x="1501.60" y="588.50" font-size="13.5" fill="#000000" textLength="66.47" lengthAdjust="spacingAndGlyphs"  stroke="#000" stroke-width="0.1">93 6946940</text>
<text x="1622.60" y="588.50" font-size="13.5" fill="#000000" textLength="123.27" lengthAdjust="spacingAndGlyphs"  stroke="#000" stroke-width="0.1">BANCO SANTANDER</text>
<path d="M1409 574 h6 l-6 6 z" fill="#207040" />
<path d="M1500 574 h6 l-6 6 z" fill="#207040" />
<text x="69.80" y="608.50" font-size="13.5" fill="#000000" textLength="14.00" lengthAdjust="spacingAndGlyphs"  stroke="#000" stroke-width="0.1">19</text>
<text x="245.60" y="608.50" font-size="13.5" fill="#000000" textLength="122.40" lengthAdjust="spacingAndGlyphs"  stroke="#000" stroke-width="0.1">Clientes potenciales</text>
<text x="459.10" y="608.50" font-size="13.5" fill="#000000" textLength="103.20" lengthAdjust="spacingAndGlyphs"  stroke="#000" stroke-width="0.1">12/12/2017 22:16</text>
<text x="702.60" y="608.50" font-size="13.5" fill="#000000" textLength="67.18" lengthAdjust="spacingAndGlyphs"  stroke="#000" stroke-width="0.1">Chocolates</text>
<text x="1326.60" y="608.50" font-size="13.5" fill="#000000" textLength="42.95" lengthAdjust="spacingAndGlyphs"  stroke="#000" stroke-width="0.1">Murcia</text>
<text x="1410.60" y="608.50" font-size="13.5" fill="#000000" textLength="35.00" lengthAdjust="spacingAndGlyphs"  stroke="#000" stroke-width="0.1">30500</text>
<text x="1501.60" y="608.50" font-size="13.5" fill="#000000" textLength="63.00" lengthAdjust="spacingAndGlyphs"  stroke="#000" stroke-width="0.1">968552415</text>
<text x="1622.60" y="608.50" font-size="13.5" fill="#000000" textLength="123.27" lengthAdjust="spacingAndGlyphs"  stroke="#000" stroke-width="0.1">BANCO SANTANDER</text>
<path d="M1409 594 h6 l-6 6 z" fill="#207040" />
<path d="M1500 594 h6 l-6 6 z" fill="#207040" />
<text x="69.80" y="628.50" font-size="13.5" fill="#000000" textLength="14.00" lengthAdjust="spacingAndGlyphs"  stroke="#000" stroke-width="0.1">20</text>
<text x="245.60" y="628.50" font-size="13.5" fill="#000000" textLength="122.40" lengthAdjust="spacingAndGlyphs"  stroke="#000" stroke-width="0.1">Clientes potenciales</text>
<text x="459.10" y="628.50" font-size="13.5" fill="#000000" textLength="103.20" lengthAdjust="spacingAndGlyphs"  stroke="#000" stroke-width="0.1">15/12/2017 13:16</text>
<text x="702.60" y="628.50" font-size="13.5" fill="#000000" textLength="32.45" lengthAdjust="spacingAndGlyphs"  stroke="#000" stroke-width="0.1">Playa</text>
<text x="1326.60" y="628.50" font-size="13.5" fill="#000000" textLength="42.95" lengthAdjust="spacingAndGlyphs"  stroke="#000" stroke-width="0.1">Murcia</text>
<text x="1410.60" y="628.50" font-size="13.5" fill="#000000" textLength="35.00" lengthAdjust="spacingAndGlyphs"  stroke="#000" stroke-width="0.1">30007</text>
<text x="1501.60" y="628.50" font-size="13.5" fill="#000000" textLength="63.00" lengthAdjust="spacingAndGlyphs"  stroke="#000" stroke-width="0.1">968552415</text>
<text x="1622.60" y="628.50" font-size="13.5" fill="#000000" textLength="71.17" lengthAdjust="spacingAndGlyphs"  stroke="#000" stroke-width="0.1">CAIXABANK</text>
<path d="M1409 614 h6 l-6 6 z" fill="#207040" />
<path d="M1500 614 h6 l-6 6 z" fill="#207040" />
<svg x="87" y="213" width="156" height="440" overflow="hidden">
<text x="2.60" y="35.50" font-size="13.5" fill="#000000" textLength="122.99" lengthAdjust="spacingAndGlyphs"  stroke="#000" stroke-width="0.1">info@stelorder.com</text>
<text x="2.60" y="55.50" font-size="13.5" fill="#000000" textLength="122.99" lengthAdjust="spacingAndGlyphs"  stroke="#000" stroke-width="0.1">info@stelorder.com</text>
<text x="2.60" y="75.50" font-size="13.5" fill="#000000" textLength="122.99" lengthAdjust="spacingAndGlyphs"  stroke="#000" stroke-width="0.1">info@stelorder.com</text>
<text x="2.60" y="95.50" font-size="13.5" fill="#000000" textLength="122.99" lengthAdjust="spacingAndGlyphs"  stroke="#000" stroke-width="0.1">info@stelorder.com</text>
<text x="2.60" y="115.50" font-size="13.5" fill="#000000" textLength="122.99" lengthAdjust="spacingAndGlyphs"  stroke="#000" stroke-width="0.1">info@stelorder.com</text>
<text x="2.60" y="135.50" font-size="13.5" fill="#000000" textLength="122.99" lengthAdjust="spacingAndGlyphs"  stroke="#000" stroke-width="0.1">info@stelorder.com</text>
<text x="2.60" y="155.50" font-size="13.5" fill="#000000" textLength="122.99" lengthAdjust="spacingAndGlyphs"  stroke="#000" stroke-width="0.1">info@stelorder.com</text>
<text x="2.60" y="175.50" font-size="13.5" fill="#000000" textLength="122.99" lengthAdjust="spacingAndGlyphs"  stroke="#000" stroke-width="0.1">info@stelorder.com</text>
<text x="2.60" y="195.50" font-size="13.5" fill="#000000" textLength="122.99" lengthAdjust="spacingAndGlyphs"  stroke="#000" stroke-width="0.1">info@stelorder.com</text>
<text x="2.60" y="215.50" font-size="13.5" fill="#000000" textLength="122.99" lengthAdjust="spacingAndGlyphs"  stroke="#000" stroke-width="0.1">info@stelorder.com</text>
<text x="2.60" y="235.50" font-size="13.5" fill="#000000" textLength="122.99" lengthAdjust="spacingAndGlyphs"  stroke="#000" stroke-width="0.1">info@stelorder.com</text>
<text x="2.60" y="255.50" font-size="13.5" fill="#000000" textLength="122.99" lengthAdjust="spacingAndGlyphs"  stroke="#000" stroke-width="0.1">info@stelorder.com</text>
<text x="2.60" y="275.50" font-size="13.5" fill="#000000" textLength="122.99" lengthAdjust="spacingAndGlyphs"  stroke="#000" stroke-width="0.1">info@stelorder.com</text>
<text x="2.60" y="295.50" font-size="13.5" fill="#000000" textLength="122.99" lengthAdjust="spacingAndGlyphs"  stroke="#000" stroke-width="0.1">info@stelorder.com</text>
<text x="2.60" y="315.50" font-size="13.5" fill="#000000" textLength="160.55" lengthAdjust="spacingAndGlyphs"  stroke="#000" stroke-width="0.1">info@lagranmanzana.com</text>
<text x="2.60" y="335.50" font-size="13.5" fill="#000000" textLength="122.99" lengthAdjust="spacingAndGlyphs"  stroke="#000" stroke-width="0.1">info@stelorder.com</text>
<text x="2.60" y="355.50" font-size="13.5" fill="#000000" textLength="122.99" lengthAdjust="spacingAndGlyphs"  stroke="#000" stroke-width="0.1">info@stelorder.com</text>
<text x="2.60" y="375.50" font-size="13.5" fill="#000000" textLength="122.99" lengthAdjust="spacingAndGlyphs"  stroke="#000" stroke-width="0.1">info@stelorder.com</text>
<text x="2.60" y="395.50" font-size="13.5" fill="#000000" textLength="122.99" lengthAdjust="spacingAndGlyphs"  stroke="#000" stroke-width="0.1">info@stelorder.com</text>
<text x="2.60" y="415.50" font-size="13.5" fill="#000000" textLength="122.99" lengthAdjust="spacingAndGlyphs"  stroke="#000" stroke-width="0.1">info@stelorder.com</text>
</svg>
<svg x="1240" y="213" width="84" height="440" overflow="hidden">
<text x="2.60" y="35.50" font-size="13.5" fill="#000000" textLength="41.98" lengthAdjust="spacingAndGlyphs"  stroke="#000" stroke-width="0.1">Toledo</text>
<text x="2.60" y="55.50" font-size="13.5" fill="#000000" textLength="32.55" lengthAdjust="spacingAndGlyphs"  stroke="#000" stroke-width="0.1">Elche</text>
<text x="2.60" y="75.50" font-size="13.5" fill="#000000" textLength="44.46" lengthAdjust="spacingAndGlyphs"  stroke="#000" stroke-width="0.1">Madrid</text>
<text x="2.60" y="95.50" font-size="13.5" fill="#000000" textLength="49.66" lengthAdjust="spacingAndGlyphs"  stroke="#000" stroke-width="0.1">Alicante</text>
<text x="2.60" y="115.50" font-size="13.5" fill="#000000" textLength="53.61" lengthAdjust="spacingAndGlyphs"  stroke="#000" stroke-width="0.1">Albacete</text>
<text x="2.60" y="135.50" font-size="13.5" fill="#000000" textLength="44.46" lengthAdjust="spacingAndGlyphs"  stroke="#000" stroke-width="0.1">Madrid</text>
<text x="2.60" y="155.50" font-size="13.5" fill="#000000" textLength="44.46" lengthAdjust="spacingAndGlyphs"  stroke="#000" stroke-width="0.1">Madrid</text>
<text x="2.60" y="175.50" font-size="13.5" fill="#000000" textLength="29.18" lengthAdjust="spacingAndGlyphs"  stroke="#000" stroke-width="0.1">Lugo</text>
<text x="2.60" y="195.50" font-size="13.5" fill="#000000" textLength="42.95" lengthAdjust="spacingAndGlyphs"  stroke="#000" stroke-width="0.1">Murcia</text>
<text x="2.60" y="215.50" font-size="13.5" fill="#000000" textLength="60.50" lengthAdjust="spacingAndGlyphs"  stroke="#000" stroke-width="0.1">San Javier</text>
<text x="2.60" y="235.50" font-size="13.5" fill="#000000" textLength="42.95" lengthAdjust="spacingAndGlyphs"  stroke="#000" stroke-width="0.1">Murcia</text>
<text x="2.60" y="255.50" font-size="13.5" fill="#000000" textLength="44.46" lengthAdjust="spacingAndGlyphs"  stroke="#000" stroke-width="0.1">Madrid</text>
<text x="2.60" y="275.50" font-size="13.5" fill="#000000" textLength="68.88" lengthAdjust="spacingAndGlyphs"  stroke="#000" stroke-width="0.1">Alcantarilla</text>
<text x="2.60" y="295.50" font-size="13.5" fill="#000000" textLength="51.61" lengthAdjust="spacingAndGlyphs"  stroke="#000" stroke-width="0.1">Valencia</text>
<text x="2.60" y="315.50" font-size="13.5" fill="#000000" textLength="100.10" lengthAdjust="spacingAndGlyphs"  stroke="#000" stroke-width="0.1">Torre de Cotillas</text>
<text x="2.60" y="335.50" font-size="13.5" fill="#000000" textLength="42.95" lengthAdjust="spacingAndGlyphs"  stroke="#000" stroke-width="0.1">Murcia</text>
<text x="2.60" y="355.50" font-size="13.5" fill="#000000" textLength="42.95" lengthAdjust="spacingAndGlyphs"  stroke="#000" stroke-width="0.1">Murcia</text>
<text x="2.60" y="375.50" font-size="13.5" fill="#000000" textLength="60.93" lengthAdjust="spacingAndGlyphs"  stroke="#000" stroke-width="0.1">Barcelona</text>
<text x="2.60" y="395.50" font-size="13.5" fill="#000000" textLength="42.95" lengthAdjust="spacingAndGlyphs"  stroke="#000" stroke-width="0.1">Murcia</text>
<text x="2.60" y="415.50" font-size="13.5" fill="#000000" textLength="42.95" lengthAdjust="spacingAndGlyphs"  stroke="#000" stroke-width="0.1">Murcia</text>
</svg>
<svg x="1780" y="213" width="116" height="440" overflow="hidden">
<text x="2.60" y="35.50" font-size="13.5" fill="#000000" textLength="140.23" lengthAdjust="spacingAndGlyphs"  stroke="#000" stroke-width="0.1">ES912100041845020000</text>
<text x="2.60" y="55.50" font-size="13.5" fill="#000000" textLength="129.70" lengthAdjust="spacingAndGlyphs"  stroke="#000" stroke-width="0.1">ES18004915000427 00</text>
<text x="2.60" y="75.50" font-size="13.5" fill="#000000" textLength="129.70" lengthAdjust="spacingAndGlyphs"  stroke="#000" stroke-width="0.1">ES18004915000427 00</text>
<text x="2.60" y="95.50" font-size="13.5" fill="#000000" textLength="129.70" lengthAdjust="spacingAndGlyphs"  stroke="#000" stroke-width="0.1">ES18004915000427 00</text>
<text x="2.60" y="115.50" font-size="13.5" fill="#000000" textLength="129.70" lengthAdjust="spacingAndGlyphs"  stroke="#000" stroke-width="0.1">ES18004915000427 00</text>
<text x="2.60" y="135.50" font-size="13.5" fill="#000000" textLength="140.23" lengthAdjust="spacingAndGlyphs"  stroke="#000" stroke-width="0.1">ES912100041845020000</text>
<text x="2.60" y="155.50" font-size="13.5" fill="#000000" textLength="129.70" lengthAdjust="spacingAndGlyphs"  stroke="#000" stroke-width="0.1">ES18004915000427 00</text>
<text x="2.60" y="175.50" font-size="13.5" fill="#000000" textLength="140.23" lengthAdjust="spacingAndGlyphs"  stroke="#000" stroke-width="0.1">ES912100041845020000</text>
<text x="2.60" y="195.50" font-size="13.5" fill="#000000" textLength="129.70" lengthAdjust="spacingAndGlyphs"  stroke="#000" stroke-width="0.1">ES18004915000427 00</text>
<text x="2.60" y="215.50" font-size="13.5" fill="#000000" textLength="140.23" lengthAdjust="spacingAndGlyphs"  stroke="#000" stroke-width="0.1">ES912100041845020000</text>
<text x="2.60" y="235.50" font-size="13.5" fill="#000000" textLength="140.23" lengthAdjust="spacingAndGlyphs"  stroke="#000" stroke-width="0.1">ES912100041845020000</text>
<text x="2.60" y="255.50" font-size="13.5" fill="#000000" textLength="129.70" lengthAdjust="spacingAndGlyphs"  stroke="#000" stroke-width="0.1">ES18004915000427 00</text>
<text x="2.60" y="275.50" font-size="13.5" fill="#000000" textLength="140.23" lengthAdjust="spacingAndGlyphs"  stroke="#000" stroke-width="0.1">ES912100041845020000</text>
<text x="2.60" y="295.50" font-size="13.5" fill="#000000" textLength="140.23" lengthAdjust="spacingAndGlyphs"  stroke="#000" stroke-width="0.1">ES912100041845020000</text>
<text x="2.60" y="315.50" font-size="13.5" fill="#000000" textLength="140.23" lengthAdjust="spacingAndGlyphs"  stroke="#000" stroke-width="0.1">ES912100041845020000</text>
<text x="2.60" y="335.50" font-size="13.5" fill="#000000" textLength="142.52" lengthAdjust="spacingAndGlyphs"  stroke="#000" stroke-width="0.1">ES-180049150004-20000</text>
<text x="2.60" y="355.50" font-size="13.5" fill="#000000" textLength="129.70" lengthAdjust="spacingAndGlyphs"  stroke="#000" stroke-width="0.1">ES18004915000427 00</text>
<text x="2.60" y="375.50" font-size="13.5" fill="#000000" textLength="140.23" lengthAdjust="spacingAndGlyphs"  stroke="#000" stroke-width="0.1">ES912100041845020000</text>
<text x="2.60" y="395.50" font-size="13.5" fill="#000000" textLength="129.70" lengthAdjust="spacingAndGlyphs"  stroke="#000" stroke-width="0.1">ES18004915000427 00</text>
<text x="2.60" y="415.50" font-size="13.5" fill="#000000" textLength="140.23" lengthAdjust="spacingAndGlyphs"  stroke="#000" stroke-width="0.1">ES912100041845020000</text>
</svg>
<text x="855.60" y="248.50" font-size="13.5" fill="#000000" textLength="92.57" lengthAdjust="spacingAndGlyphs"  stroke="#000" stroke-width="0.1">Marilandia, S.A</text>
<text x="1051.60" y="248.50" font-size="13.5" fill="#000000" textLength="163.26" lengthAdjust="spacingAndGlyphs"  stroke="#000" stroke-width="0.1">Paseo Cristo de la Vega, 12</text>
<text x="855.60" y="268.50" font-size="13.5" fill="#000000" textLength="73.62" lengthAdjust="spacingAndGlyphs"  stroke="#000" stroke-width="0.1">Luz Clar, S.C</text>
<text x="1051.60" y="268.50" font-size="13.5" fill="#000000" textLength="138.07" lengthAdjust="spacingAndGlyphs"  stroke="#000" stroke-width="0.1">Avenida Ferrocarril, 34</text>
<text x="855.60" y="288.50" font-size="13.5" fill="#000000" textLength="97.53" lengthAdjust="spacingAndGlyphs"  stroke="#000" stroke-width="0.1">Todo Plus, S.C.B</text>
<text x="1051.60" y="288.50" font-size="13.5" fill="#000000" textLength="133.41" lengthAdjust="spacingAndGlyphs"  stroke="#000" stroke-width="0.1">Carmen de Burgos, 32</text>
<svg x="1236" y="393" width="4" height="60" overflow="hidden">
<text x="-6.00" y="15.50" font-size="14" fill="#1a1a1a"  >7</text>
<text x="-5.50" y="55.50" font-size="14" fill="#1a1a1a"  >R</text>
</svg>
<rect x="431" y="234" width="134.5" height="398.5" fill="none" stroke="#217346" stroke-width="2" />
<rect x="562.5" y="630.5" width="6" height="6" fill="#217346" stroke="#ffffff" stroke-width="1" />
<rect x="731" y="300" width="507" height="425" fill="#000" opacity="0.22" filter="url(#shadow)"/>
<rect x="729.5" y="296.5" width="506" height="422" fill="#e8f3fb" stroke="#587a98" stroke-width="1" />
<rect x="734" y="301" width="497" height="25" fill="#ffffff" />
<rect x="734" y="326" width="497" height="386" fill="#f0f0f0" />
<text x="738.50" y="315.60" font-size="12.5" fill="#1a1a1a" textLength="293.20" lengthAdjust="spacingAndGlyphs"  >Asistente para convertir texto en columnas - paso 2 de 3</text>
<text x="1164.80" y="315.80" font-size="13" fill="#222" textLength="5.20" lengthAdjust="spacingAndGlyphs"  stroke="#222" stroke-width="0.5">?</text>
<path d="M1207 306 l10 10 M1217 306 l-10 10" fill="none" stroke="#222" stroke-width="1.1" />
<text x="737.00" y="344.70" font-size="11" fill="#1a1a1a" textLength="487.20" lengthAdjust="spacingAndGlyphs"  >Esta pantalla le permite establecer los separadores contenidos en los datos. Se puede ver cómo</text>
<text x="737.00" y="357.70" font-size="11" fill="#1a1a1a" textLength="166.30" lengthAdjust="spacingAndGlyphs"  >cambia el texto en la vista previa.</text>
<rect x="736.5" y="377.5" width="104" height="113" fill="none" stroke="#dcdcdc" stroke-width="1" />
<rect x="740" y="372" width="68" height="12" fill="#f0f0f0" />
<text x="742.40" y="381.60" font-size="11" fill="#1a1a1a" textLength="63.10" lengthAdjust="spacingAndGlyphs"  >Separadores</text>
<rect x="745.5" y="392.5" width="12" height="12" fill="#ffffff" stroke="#333333" stroke-width="1" />
<text x="762.30" y="402.80" font-size="11" fill="#1a1a1a" textLength="55.40" lengthAdjust="spacingAndGlyphs"  >Tabulación</text>
<line x1="768.5" y1="404.3" x2="775" y2="404.3" stroke="#1a1a1a" stroke-width="0.9" />
<rect x="745.5" y="411.5" width="12" height="12" fill="#ffffff" stroke="#333333" stroke-width="1" />
<text x="762.30" y="421.80" font-size="11" fill="#1a1a1a" textLength="68.50" lengthAdjust="spacingAndGlyphs"  >Punto y coma</text>
<line x1="762.5" y1="423.3" x2="769" y2="423.3" stroke="#1a1a1a" stroke-width="0.9" />
<rect x="745.5" y="430.5" width="12" height="12" fill="#ffffff" stroke="#333333" stroke-width="1" />
<text x="762.30" y="440.80" font-size="11" fill="#1a1a1a" textLength="28.10" lengthAdjust="spacingAndGlyphs"  >Coma</text>
<rect x="745.5" y="449.5" width="12" height="12" fill="#ffffff" stroke="#333333" stroke-width="1" />
<path d="M747.5 455.5 l3 3.2 l5.5 -6.5" fill="none" stroke="#333333" stroke-width="1.2" />
<text x="762.30" y="459.80" font-size="11" fill="#1a1a1a" textLength="38.30" lengthAdjust="spacingAndGlyphs"  >Espacio</text>
<line x1="762.5" y1="461.3" x2="769" y2="461.3" stroke="#1a1a1a" stroke-width="0.9" />
<rect x="745.5" y="470.0" width="12" height="12" fill="#ffffff" stroke="#333333" stroke-width="1" />
<text x="762.30" y="480.30" font-size="11" fill="#1a1a1a" textLength="26.00" lengthAdjust="spacingAndGlyphs"  >Otro:</text>
<line x1="762.5" y1="481.8" x2="770" y2="481.8" stroke="#1a1a1a" stroke-width="0.9" />
<rect x="801.5" y="467.5" width="29" height="19" fill="#ffffff" stroke="#d5d5d5" stroke-width="1" />
<rect x="852.5" y="409.5" width="12" height="12" fill="#ffffff" stroke="#333333" stroke-width="1" />
<path d="M854.5 415.5 l3 3.2 l5.5 -6.5" fill="none" stroke="#333333" stroke-width="1.2" />
<text x="869.30" y="420.60" font-size="11" fill="#1a1a1a" textLength="270.70" lengthAdjust="spacingAndGlyphs"  >Considerar separadores consecutivos como uno solo</text>
<line x1="886" y1="422.1" x2="892.5" y2="422.1" stroke="#1a1a1a" stroke-width="0.9" />
<text x="852.40" y="449.60" font-size="11" fill="#1a1a1a" textLength="102.20" lengthAdjust="spacingAndGlyphs"  >Calificador de texto:</text>
<line x1="933" y1="451.1" x2="939" y2="451.1" stroke="#1a1a1a" stroke-width="0.9" />
<rect x="964.5" y="435.5" width="178" height="21" fill="#ffffff" stroke="#a8a8a8" stroke-width="1" />
<rect x="1125.5" y="436.5" width="16" height="19" fill="#e1e1e1" />
<line x1="1125.5" y1="436" x2="1125.5" y2="456" stroke="#c8c8c8" stroke-width="1" />
<path d="M1129.5 443.5 l4 4 l4 -4" fill="none" stroke="#555" stroke-width="1.1" />
<text x="969.00" y="446.00" font-size="11" fill="#1a1a1a" textLength="3.00" lengthAdjust="spacingAndGlyphs"  >&quot;</text>
<rect x="736.5" y="535.5" width="490" height="138.5" fill="none" stroke="#dcdcdc" stroke-width="1" />
<rect x="740" y="531" width="130" height="10" fill="#f0f0f0" />
<text x="742.50" y="539.90" font-size="11" fill="#1a1a1a" textLength="124.20" lengthAdjust="spacingAndGlyphs"  >Vista previa de los datos</text>
<line x1="742.5" y1="541.4" x2="749.5" y2="541.4" stroke="#1a1a1a" stroke-width="0.9" />
<rect x="745" y="577" width="458" height="76" fill="#ffffff" />
<line x1="745.5" y1="577" x2="745.5" y2="653" stroke="#000" stroke-width="1.2" />
<line x1="745" y1="577.5" x2="1203" y2="577.5" stroke="#000" stroke-width="1.2" />
<line x1="1202.5" y1="577" x2="1202.5" y2="653" stroke="#000" stroke-width="1" />
<line x1="822.5" y1="578" x2="822.5" y2="653" stroke="#000" stroke-width="1.2" />
<rect x="1203" y="578" width="17" height="75" fill="#f0f0f0" />
<path d="M1207.5 589 l4 -4 l4 4" fill="none" stroke="#555" stroke-width="1.2" />
<rect x="1205" y="594" width="13.5" height="16.5" fill="#cdcdcd" />
<path d="M1207.5 642 l4 4 l4 -4" fill="none" stroke="#555" stroke-width="1.2" />
<rect x="745" y="653" width="458" height="17" fill="#f0f0f0" />
<path d="M1193.5 657.5 l3.5 3.5 l-3.5 3.5" fill="none" stroke="#a8a8a8" stroke-width="1.1" />
<path d="M757 657.5 l-3.5 3.5 l3.5 3.5" fill="none" stroke="#d0d0d0" stroke-width="1.1" />
<text x="745.80" y="591.00" font-size="11.5" fill="#111" textLength="69.00" lengthAdjust="spacingAndGlyphs" font-family="Liberation Mono, monospace" >20/07/2016</text>
<text x="823.20" y="591.00" font-size="11.5" fill="#111" textLength="54.80" lengthAdjust="spacingAndGlyphs" font-family="Liberation Mono, monospace" >12:13:26</text>
<text x="745.80" y="604.90" font-size="11.5" fill="#111" textLength="69.00" lengthAdjust="spacingAndGlyphs" font-family="Liberation Mono, monospace" >20/07/2016</text>
<text x="823.20" y="604.90" font-size="11.5" fill="#111" textLength="54.80" lengthAdjust="spacingAndGlyphs" font-family="Liberation Mono, monospace" >13:16:26</text>
<text x="745.80" y="618.80" font-size="11.5" fill="#111" textLength="69.00" lengthAdjust="spacingAndGlyphs" font-family="Liberation Mono, monospace" >20/07/2016</text>
<text x="823.20" y="618.80" font-size="11.5" fill="#111" textLength="54.80" lengthAdjust="spacingAndGlyphs" font-family="Liberation Mono, monospace" >15:45:26</text>
<text x="745.80" y="632.70" font-size="11.5" fill="#111" textLength="69.00" lengthAdjust="spacingAndGlyphs" font-family="Liberation Mono, monospace" >21/07/2016</text>
<text x="823.20" y="632.70" font-size="11.5" fill="#111" textLength="54.80" lengthAdjust="spacingAndGlyphs" font-family="Liberation Mono, monospace" >13:20:26</text>
<text x="745.80" y="646.60" font-size="11.5" fill="#111" textLength="69.00" lengthAdjust="spacingAndGlyphs" font-family="Liberation Mono, monospace" >21/07/2016</text>
<text x="823.20" y="646.60" font-size="11.5" fill="#111" textLength="54.80" lengthAdjust="spacingAndGlyphs" font-family="Liberation Mono, monospace" >16:13:26</text>
<rect x="899.5" y="688.5" width="73" height="21" fill="#e1e1e1" stroke="#adadad" stroke-width="1" />
<text x="914.60" y="702.70" font-size="11.5" fill="#1a1a1a" textLength="43.30" lengthAdjust="spacingAndGlyphs"  >Cancelar</text>
<rect x="983.5" y="688.5" width="73" height="21" fill="#e1e1e1" stroke="#adadad" stroke-width="1" />
<text x="1002.20" y="702.70" font-size="11.5" fill="#1a1a1a" textLength="35.20" lengthAdjust="spacingAndGlyphs"  >&lt; Atrás</text>
<line x1="1016.5" y1="704.2" x2="1021.5" y2="704.2" stroke="#1a1a1a" stroke-width="0.9" />
<rect x="1068" y="689.0" width="75" height="20.5" fill="#e1e1e1" stroke="#0078d7" stroke-width="2" />
<rect x="1070.5" y="691.5" width="70" height="15" fill="none" stroke="#111" stroke-width="1" stroke-dasharray="1 1"/>
<text x="1075.20" y="702.70" font-size="11.5" fill="#1a1a1a" textLength="58.40" lengthAdjust="spacingAndGlyphs"  >Siguiente &gt;</text>
<line x1="1075.5" y1="704.2" x2="1082" y2="704.2" stroke="#1a1a1a" stroke-width="0.9" />
<rect x="1154.5" y="688.5" width="73" height="21" fill="#e1e1e1" stroke="#adadad" stroke-width="1" />
<text x="1169.20" y="702.70" font-size="11.5" fill="#1a1a1a" textLength="42.30" lengthAdjust="spacingAndGlyphs"  >Finalizar</text>
<line x1="1169.5" y1="704.2" x2="1176" y2="704.2" stroke="#1a1a1a" stroke-width="0.9" />
<rect x="738" y="442" width="78" height="28" fill="none" stroke="#e8902a" stroke-width="3" rx="8" />
<path d="M687 415 H718 C728 415 732 425 735 436 L738 446" fill="none" stroke="#e8902a" stroke-width="3" stroke-linecap="round"/>
<rect x="737.5" y="568" width="148.5" height="93.5" fill="none" stroke="#e8902a" stroke-width="3" rx="13" />
<path d="M703.5 651.5 C712 654 722 652 729 649 C733 647 736 645 738 643" fill="none" stroke="#e8902a" stroke-width="3" stroke-linecap="round"/>
<rect x="1061" y="683.5" width="89" height="31.5" fill="none" stroke="#e8902a" stroke-width="3" rx="8" />
<path d="M1088 716 C1083 719 1081 723 1082 727 C1083 730 1085 731 1085.5 733" fill="none" stroke="#e8902a" stroke-width="3" stroke-linecap="round"/>
<text x="606.00" y="422.50" font-size="19.5" fill="#c8283c" textLength="70.80" lengthAdjust="spacingAndGlyphs" font-weight="700"  stroke="#ffffff" stroke-width="2.5" paint-order="stroke" stroke-linejoin="round">Select a</text>
<text x="590.50" y="448.40" font-size="19.5" fill="#c8283c" textLength="102.50" lengthAdjust="spacingAndGlyphs" font-weight="700"  stroke="#ffffff" stroke-width="2.5" paint-order="stroke" stroke-linejoin="round">separator -</text>
<text x="599.00" y="474.00" font-size="19.5" fill="#c8283c" textLength="86.00" lengthAdjust="spacingAndGlyphs" font-weight="700"  stroke="#ffffff" stroke-width="2.5" paint-order="stroke" stroke-linejoin="round">here it&#x27;s a</text>
<text x="615.80" y="500.40" font-size="19.5" fill="#c8283c" textLength="51.20" lengthAdjust="spacingAndGlyphs" font-weight="700"  stroke="#ffffff" stroke-width="2.5" paint-order="stroke" stroke-linejoin="round">space</text>
<text x="565.40" y="656.30" font-size="19.5" fill="#c8283c" textLength="137.80" lengthAdjust="spacingAndGlyphs" font-weight="700"  stroke="#ffffff" stroke-width="2.5" paint-order="stroke" stroke-linejoin="round">As you can see,</text>
<text x="565.00" y="682.10" font-size="19.5" fill="#c8283c" textLength="138.20" lengthAdjust="spacingAndGlyphs" font-weight="700"  stroke="#ffffff" stroke-width="2.5" paint-order="stroke" stroke-linejoin="round">a date and hour</text>
<text x="606.70" y="708.10" font-size="19.5" fill="#c8283c" textLength="56.20" lengthAdjust="spacingAndGlyphs" font-weight="700"  stroke="#ffffff" stroke-width="2.5" paint-order="stroke" stroke-linejoin="round">will be</text>
<text x="567.40" y="734.10" font-size="19.5" fill="#c8283c" textLength="133.50" lengthAdjust="spacingAndGlyphs" font-weight="700"  stroke="#ffffff" stroke-width="2.5" paint-order="stroke" stroke-linejoin="round">separated now</text>
<text x="1057.90" y="745.80" font-size="20.5" fill="#c8283c" textLength="130.00" lengthAdjust="spacingAndGlyphs" font-weight="700"  stroke="#ffffff" stroke-width="2.5" paint-order="stroke" stroke-linejoin="round">Click on &quot;next&quot;</text>
</svg>
</body></html>
